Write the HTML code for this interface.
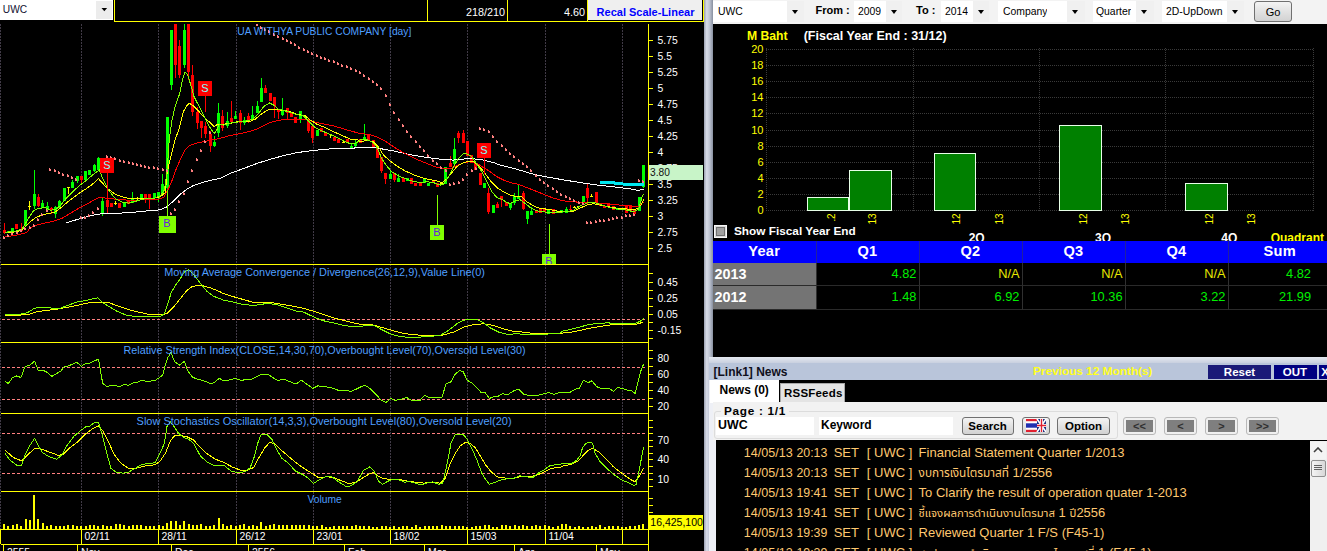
<!DOCTYPE html>
<html><head><meta charset="utf-8"><title>UWC</title><style>
html,body{margin:0;padding:0;background:#000;}
body{width:1327px;height:551px;overflow:hidden;position:relative;font-family:"Liberation Sans", Arial, sans-serif;}
.abs{position:absolute;box-sizing:border-box;}
.t{position:absolute;white-space:nowrap;line-height:1;}
.b{font-weight:bold;}
.combo{position:absolute;top:1px;height:21px;background:#fff;box-sizing:border-box;}
.cbtn{position:absolute;top:1px;height:21px;width:17px;background:#f0f0f0;}
.cbtn:after{content:"";position:absolute;left:5px;top:9px;border-left:3.5px solid transparent;border-right:3.5px solid transparent;border-top:4px solid #000;}
.ct{position:absolute;top:5px;font-size:10.4px;color:#000;white-space:nowrap;line-height:13px;}
.hdr{position:absolute;top:241px;height:22px;background:#0000ff;color:#fff;font-weight:bold;font-size:14.6px;letter-spacing:0.3px;text-align:center;line-height:20.5px;}
.cell{position:absolute;height:23.2px;line-height:22px;font-size:12.8px;text-align:right;box-sizing:border-box;padding-right:2px;color:#00f000;border-right:1px solid #303030;border-bottom:1px solid #2a2a2a;}
.yr{background:#747474;color:#fff;font-weight:bold;text-align:left;padding-left:1.5px;font-size:14.4px;}
.na{color:#e8e800;}
.btn{position:absolute;box-sizing:border-box;border:1px solid #707070;border-radius:3px;background:linear-gradient(#f4f4f4,#e2e2e2 50%,#d2d2d2);font-size:11px;font-weight:bold;color:#000;text-align:center;}
.nav{position:absolute;box-sizing:border-box;border:1px solid #b8b8b8;border-radius:3px;background:#f0f0f0;}
.nav i{position:absolute;left:2px;top:2px;right:2px;bottom:2px;background:#7f7f7f;color:#303030;font-style:normal;font-weight:bold;font-size:11px;text-align:center;line-height:13px;}
.nw{position:absolute;white-space:nowrap;color:#ffc870;font-size:13px;line-height:20px;font-family:"Liberation Sans", Arial, "Noto Sans Thai", "Tahoma", sans-serif;}
</style></head><body>
<svg width="704" height="551" viewBox="0 0 704 551" style="position:absolute;left:0;top:0" font-family='&quot;Liberation Sans&quot;, Arial, sans-serif' font-size="10.8px" shape-rendering="crispEdges">
<rect x="0" y="0" width="704" height="551" fill="#000"/>
<line x1="0.5" y1="24" x2="0.5" y2="529" stroke="#403a46" stroke-width="1" stroke-dasharray="2,1"/>
<line x1="81.5" y1="24" x2="81.5" y2="529" stroke="#403a46" stroke-width="1" stroke-dasharray="2,1"/>
<line x1="158.5" y1="24" x2="158.5" y2="529" stroke="#403a46" stroke-width="1" stroke-dasharray="2,1"/>
<line x1="236.5" y1="24" x2="236.5" y2="529" stroke="#403a46" stroke-width="1" stroke-dasharray="2,1"/>
<line x1="313.5" y1="24" x2="313.5" y2="529" stroke="#403a46" stroke-width="1" stroke-dasharray="2,1"/>
<line x1="390.5" y1="24" x2="390.5" y2="529" stroke="#403a46" stroke-width="1" stroke-dasharray="2,1"/>
<line x1="467.5" y1="24" x2="467.5" y2="529" stroke="#403a46" stroke-width="1" stroke-dasharray="2,1"/>
<line x1="545.5" y1="24" x2="545.5" y2="529" stroke="#403a46" stroke-width="1" stroke-dasharray="2,1"/>
<line x1="622.5" y1="24" x2="622.5" y2="529" stroke="#403a46" stroke-width="1" stroke-dasharray="2,1"/>
<g id="main">
<clipPath id="cpm"><rect x="1" y="24" width="647" height="240"/></clipPath>
<g clip-path="url(#cpm)">
<rect x="4" y="223.4" width="1" height="10.9" fill="#ff0000"/>
<rect x="3" y="229.7" width="3" height="3.7" fill="#ff0000"/>
<rect x="8" y="230.9" width="1" height="1.7" fill="#00ff00"/>
<rect x="7" y="230.9" width="3" height="1.7" fill="#00ff00"/>
<rect x="12" y="228.4" width="1" height="4.2" fill="#00ff00"/>
<rect x="11" y="228.4" width="3" height="4.2" fill="#00ff00"/>
<rect x="16" y="224.2" width="1" height="5.0" fill="#ff0000"/>
<rect x="15" y="224.2" width="3" height="5.0" fill="#ff0000"/>
<rect x="21" y="223.4" width="1" height="8.3" fill="#ff0000"/>
<rect x="20" y="228.7" width="3" height="2.2" fill="#ff0000"/>
<rect x="25" y="210.0" width="1" height="15.9" fill="#00ff00"/>
<rect x="24" y="210.0" width="3" height="15.9" fill="#00ff00"/>
<rect x="29" y="201.4" width="1" height="8.3" fill="#ffff00"/>
<rect x="28" y="205.6" width="3" height="1" fill="#ffff00"/>
<rect x="34" y="170.1" width="1" height="38.4" fill="#00ff00"/>
<rect x="33" y="193.8" width="3" height="12.2" fill="#00ff00"/>
<rect x="38" y="193.8" width="1" height="13.0" fill="#ff0000"/>
<rect x="37" y="196.8" width="3" height="9.2" fill="#ff0000"/>
<rect x="42" y="200.1" width="1" height="8.3" fill="#00ff00"/>
<rect x="41" y="203.1" width="3" height="4.5" fill="#00ff00"/>
<rect x="47" y="202.1" width="1" height="8.8" fill="#00ff00"/>
<rect x="46" y="205.9" width="3" height="4.2" fill="#00ff00"/>
<rect x="51" y="206.8" width="1" height="6.7" fill="#ff0000"/>
<rect x="50" y="207.6" width="3" height="2.2" fill="#ff0000"/>
<rect x="55" y="205.9" width="1" height="12.5" fill="#00ff00"/>
<rect x="54" y="206.8" width="3" height="6.7" fill="#00ff00"/>
<rect x="59" y="200.1" width="1" height="8.3" fill="#00ff00"/>
<rect x="58" y="200.9" width="3" height="6.7" fill="#00ff00"/>
<rect x="64" y="188.1" width="1" height="12.9" fill="#00ff00"/>
<rect x="63" y="188.1" width="3" height="12.9" fill="#00ff00"/>
<rect x="68" y="187.2" width="1" height="6.5" fill="#ffff00"/>
<rect x="67" y="187.2" width="3" height="1" fill="#ffff00"/>
<rect x="72" y="180.1" width="1" height="8.3" fill="#00ff00"/>
<rect x="71" y="181.7" width="3" height="5.8" fill="#00ff00"/>
<rect x="77" y="175.9" width="1" height="7.5" fill="#00ff00"/>
<rect x="76" y="175.9" width="3" height="5.0" fill="#00ff00"/>
<rect x="81" y="175.9" width="1" height="9.2" fill="#ff0000"/>
<rect x="80" y="175.9" width="3" height="4.2" fill="#ff0000"/>
<rect x="85" y="170.9" width="1" height="9.2" fill="#00ff00"/>
<rect x="84" y="170.9" width="3" height="9.2" fill="#00ff00"/>
<rect x="89" y="170.1" width="1" height="5.0" fill="#00ff00"/>
<rect x="88" y="170.1" width="3" height="5.0" fill="#00ff00"/>
<rect x="94" y="163.9" width="1" height="7.8" fill="#00ff00"/>
<rect x="93" y="165.0" width="3" height="5.8" fill="#00ff00"/>
<rect x="98" y="156.7" width="1" height="14.2" fill="#00ff00"/>
<rect x="97" y="158.0" width="3" height="12.0" fill="#00ff00"/>
<rect x="102" y="197.6" width="1" height="18.4" fill="#00ff00"/>
<rect x="101" y="200.9" width="3" height="12.5" fill="#00ff00"/>
<rect x="107" y="199.8" width="1" height="12.9" fill="#ff0000"/>
<rect x="106" y="199.8" width="3" height="7.0" fill="#ff0000"/>
<rect x="111" y="202.6" width="1" height="4.2" fill="#ff0000"/>
<rect x="110" y="202.6" width="3" height="4.2" fill="#ff0000"/>
<rect x="115" y="200.9" width="1" height="4.2" fill="#ffff00"/>
<rect x="114" y="202.9" width="3" height="1" fill="#ffff00"/>
<rect x="119" y="203.1" width="1" height="4.5" fill="#ff0000"/>
<rect x="118" y="203.1" width="3" height="4.5" fill="#ff0000"/>
<rect x="124" y="201.8" width="1" height="5.0" fill="#00ff00"/>
<rect x="123" y="201.8" width="3" height="5.0" fill="#00ff00"/>
<rect x="128" y="200.4" width="1" height="3.8" fill="#ff0000"/>
<rect x="127" y="200.4" width="3" height="3.8" fill="#ff0000"/>
<rect x="132" y="192.1" width="1" height="10.5" fill="#00ff00"/>
<rect x="131" y="198.4" width="3" height="4.2" fill="#00ff00"/>
<rect x="137" y="197.1" width="1" height="2.7" fill="#ffff00"/>
<rect x="136" y="198.4" width="3" height="1" fill="#ffff00"/>
<rect x="141" y="194.3" width="1" height="4.2" fill="#00ff00"/>
<rect x="140" y="194.3" width="3" height="4.2" fill="#00ff00"/>
<rect x="145" y="194.3" width="1" height="8.3" fill="#ff0000"/>
<rect x="144" y="194.3" width="3" height="4.2" fill="#ff0000"/>
<rect x="149" y="194.3" width="1" height="15.0" fill="#ff0000"/>
<rect x="148" y="194.3" width="3" height="4.2" fill="#ff0000"/>
<rect x="154" y="193.4" width="1" height="5.0" fill="#00ff00"/>
<rect x="153" y="193.4" width="3" height="5.0" fill="#00ff00"/>
<rect x="158" y="191.8" width="1" height="10.0" fill="#00ff00"/>
<rect x="157" y="191.8" width="3" height="5.8" fill="#00ff00"/>
<rect x="162" y="174.2" width="1" height="18.4" fill="#00ff00"/>
<rect x="161" y="184.2" width="3" height="8.3" fill="#00ff00"/>
<rect x="167" y="117.2" width="1" height="98.8" fill="#00ff00"/>
<rect x="166" y="117.2" width="3" height="71.2" fill="#00ff00"/>
<rect x="171" y="30.0" width="1" height="59.6" fill="#00ff00"/>
<rect x="170" y="30.0" width="3" height="55.1" fill="#00ff00"/>
<rect x="175" y="24.0" width="1" height="54.0" fill="#ff0000"/>
<rect x="174" y="24.0" width="3" height="41.0" fill="#ff0000"/>
<rect x="179" y="40.0" width="1" height="38.0" fill="#ff0000"/>
<rect x="178" y="45.9" width="3" height="29.1" fill="#ff0000"/>
<rect x="184" y="24.0" width="1" height="44.0" fill="#00ff00"/>
<rect x="183" y="30.0" width="3" height="35.0" fill="#00ff00"/>
<rect x="188" y="24.0" width="1" height="56.0" fill="#ff0000"/>
<rect x="187" y="24.0" width="3" height="48.0" fill="#ff0000"/>
<rect x="192" y="65.0" width="1" height="50.9" fill="#ff0000"/>
<rect x="191" y="75.0" width="3" height="36.7" fill="#ff0000"/>
<rect x="197" y="106.7" width="1" height="22.5" fill="#ff0000"/>
<rect x="196" y="111.7" width="3" height="11.7" fill="#ff0000"/>
<rect x="201" y="120.9" width="1" height="16.7" fill="#ff0000"/>
<rect x="200" y="120.9" width="3" height="7.5" fill="#ff0000"/>
<rect x="205" y="121.7" width="1" height="16.7" fill="#ff0000"/>
<rect x="204" y="125.9" width="3" height="8.3" fill="#ff0000"/>
<rect x="210" y="130.9" width="1" height="20.9" fill="#ff0000"/>
<rect x="209" y="134.2" width="3" height="11.7" fill="#ff0000"/>
<rect x="214" y="135.9" width="1" height="10.9" fill="#00ff00"/>
<rect x="213" y="141.8" width="3" height="4.2" fill="#00ff00"/>
<rect x="218" y="103.0" width="1" height="33.7" fill="#00ff00"/>
<rect x="217" y="113.4" width="3" height="19.2" fill="#00ff00"/>
<rect x="222" y="110.0" width="1" height="20.9" fill="#ff0000"/>
<rect x="221" y="115.9" width="3" height="11.7" fill="#ff0000"/>
<rect x="227" y="111.7" width="1" height="15.9" fill="#00ff00"/>
<rect x="226" y="120.9" width="3" height="5.0" fill="#00ff00"/>
<rect x="231" y="100.9" width="1" height="21.7" fill="#ff0000"/>
<rect x="230" y="118.4" width="3" height="3.3" fill="#ff0000"/>
<rect x="235" y="110.9" width="1" height="7.8" fill="#00ff00"/>
<rect x="234" y="115.9" width="3" height="2.8" fill="#00ff00"/>
<rect x="240" y="110.0" width="1" height="20.0" fill="#ff0000"/>
<rect x="239" y="112.9" width="3" height="9.7" fill="#ff0000"/>
<rect x="244" y="116.7" width="1" height="8.3" fill="#00ff00"/>
<rect x="243" y="120.1" width="3" height="2.5" fill="#00ff00"/>
<rect x="248" y="112.5" width="1" height="10.9" fill="#ff0000"/>
<rect x="247" y="115.9" width="3" height="5.0" fill="#ff0000"/>
<rect x="252" y="105.9" width="1" height="14.2" fill="#00ff00"/>
<rect x="251" y="115.0" width="3" height="5.0" fill="#00ff00"/>
<rect x="257" y="100.9" width="1" height="12.5" fill="#00ff00"/>
<rect x="256" y="105.9" width="3" height="7.5" fill="#00ff00"/>
<rect x="261" y="78.0" width="1" height="23.7" fill="#00ff00"/>
<rect x="260" y="88.0" width="3" height="13.7" fill="#00ff00"/>
<rect x="265" y="85.0" width="1" height="8.3" fill="#ff0000"/>
<rect x="264" y="88.0" width="3" height="5.3" fill="#ff0000"/>
<rect x="270" y="93.3" width="1" height="7.6" fill="#ff0000"/>
<rect x="269" y="93.3" width="3" height="7.6" fill="#ff0000"/>
<rect x="274" y="96.7" width="1" height="21.7" fill="#ff0000"/>
<rect x="273" y="96.7" width="3" height="9.2" fill="#ff0000"/>
<rect x="278" y="109.2" width="1" height="10.0" fill="#ff0000"/>
<rect x="277" y="109.2" width="3" height="2.5" fill="#ff0000"/>
<rect x="282" y="97.5" width="1" height="18.4" fill="#00ff00"/>
<rect x="281" y="109.7" width="3" height="5.3" fill="#00ff00"/>
<rect x="287" y="108.0" width="1" height="11.2" fill="#ff0000"/>
<rect x="286" y="108.0" width="3" height="4.5" fill="#ff0000"/>
<rect x="291" y="112.5" width="1" height="4.2" fill="#ff0000"/>
<rect x="290" y="112.5" width="3" height="4.2" fill="#ff0000"/>
<rect x="295" y="116.7" width="1" height="6.7" fill="#ff0000"/>
<rect x="294" y="116.7" width="3" height="6.7" fill="#ff0000"/>
<rect x="300" y="110.9" width="1" height="12.5" fill="#00ff00"/>
<rect x="299" y="110.9" width="3" height="8.3" fill="#00ff00"/>
<rect x="308" y="119.2" width="1" height="13.9" fill="#ff0000"/>
<rect x="307" y="119.2" width="3" height="12.2" fill="#ff0000"/>
<rect x="312" y="125.9" width="1" height="16.7" fill="#ff0000"/>
<rect x="311" y="125.9" width="3" height="12.5" fill="#ff0000"/>
<rect x="317" y="129.7" width="1" height="6.2" fill="#00ff00"/>
<rect x="316" y="129.7" width="3" height="6.2" fill="#00ff00"/>
<rect x="321" y="128.4" width="1" height="3.3" fill="#ff0000"/>
<rect x="320" y="128.4" width="3" height="3.3" fill="#ff0000"/>
<rect x="325" y="132.6" width="1" height="3.3" fill="#ff0000"/>
<rect x="324" y="132.6" width="3" height="3.3" fill="#ff0000"/>
<rect x="330" y="133.7" width="1" height="4.7" fill="#ffff00"/>
<rect x="329" y="133.7" width="3" height="1" fill="#ffff00"/>
<rect x="334" y="136.7" width="1" height="4.2" fill="#ff0000"/>
<rect x="333" y="136.7" width="3" height="4.2" fill="#ff0000"/>
<rect x="338" y="138.9" width="1" height="3.7" fill="#ff0000"/>
<rect x="337" y="138.9" width="3" height="3.7" fill="#ff0000"/>
<rect x="343" y="140.9" width="1" height="1.8" fill="#ffff00"/>
<rect x="342" y="141.8" width="3" height="1" fill="#ffff00"/>
<rect x="347" y="139.2" width="1" height="3.3" fill="#ff0000"/>
<rect x="346" y="139.2" width="3" height="3.3" fill="#ff0000"/>
<rect x="351" y="143.4" width="1" height="4.2" fill="#00ff00"/>
<rect x="350" y="145.9" width="3" height="1.7" fill="#00ff00"/>
<rect x="355" y="140.1" width="1" height="7.5" fill="#00ff00"/>
<rect x="354" y="142.6" width="3" height="3.3" fill="#00ff00"/>
<rect x="360" y="139.2" width="1" height="3.3" fill="#ff0000"/>
<rect x="359" y="139.2" width="3" height="3.3" fill="#ff0000"/>
<rect x="364" y="124.0" width="1" height="15.2" fill="#00ff00"/>
<rect x="363" y="136.7" width="3" height="2.5" fill="#00ff00"/>
<rect x="368" y="134.2" width="1" height="5.8" fill="#ff0000"/>
<rect x="367" y="134.2" width="3" height="5.8" fill="#ff0000"/>
<rect x="373" y="140.0" width="1" height="6.7" fill="#ff0000"/>
<rect x="372" y="140.0" width="3" height="6.7" fill="#ff0000"/>
<rect x="377" y="145.9" width="1" height="11.7" fill="#ff0000"/>
<rect x="376" y="145.9" width="3" height="11.7" fill="#ff0000"/>
<rect x="381" y="156.7" width="1" height="15.9" fill="#ff0000"/>
<rect x="380" y="156.7" width="3" height="14.2" fill="#ff0000"/>
<rect x="385" y="173.4" width="1" height="10.4" fill="#ff0000"/>
<rect x="384" y="173.4" width="3" height="5.8" fill="#ff0000"/>
<rect x="390" y="170.9" width="1" height="8.3" fill="#00ff00"/>
<rect x="389" y="173.7" width="3" height="5.5" fill="#00ff00"/>
<rect x="394" y="173.1" width="1" height="8.7" fill="#ff0000"/>
<rect x="393" y="173.1" width="3" height="7.0" fill="#ff0000"/>
<rect x="398" y="173.7" width="1" height="8.0" fill="#00ff00"/>
<rect x="397" y="178.4" width="3" height="3.3" fill="#00ff00"/>
<rect x="403" y="178.4" width="1" height="3.3" fill="#ff0000"/>
<rect x="402" y="178.4" width="3" height="3.3" fill="#ff0000"/>
<rect x="407" y="177.6" width="1" height="3.3" fill="#00ff00"/>
<rect x="406" y="177.6" width="3" height="3.3" fill="#00ff00"/>
<rect x="411" y="178.4" width="1" height="5.3" fill="#ff0000"/>
<rect x="410" y="178.4" width="3" height="5.3" fill="#ff0000"/>
<rect x="415" y="182.6" width="1" height="3.3" fill="#ff0000"/>
<rect x="414" y="182.6" width="3" height="3.3" fill="#ff0000"/>
<rect x="420" y="183.1" width="1" height="2.5" fill="#ff0000"/>
<rect x="419" y="183.1" width="3" height="2.5" fill="#ff0000"/>
<rect x="424" y="178.4" width="1" height="5.0" fill="#00ff00"/>
<rect x="423" y="178.4" width="3" height="5.0" fill="#00ff00"/>
<rect x="428" y="182.6" width="1" height="3.3" fill="#00ff00"/>
<rect x="427" y="182.6" width="3" height="3.3" fill="#00ff00"/>
<rect x="433" y="180.9" width="1" height="2.5" fill="#ff0000"/>
<rect x="432" y="180.9" width="3" height="2.5" fill="#ff0000"/>
<rect x="437" y="182.6" width="1" height="4.2" fill="#ff0000"/>
<rect x="436" y="182.6" width="3" height="4.2" fill="#ff0000"/>
<rect x="441" y="182.1" width="1" height="3.0" fill="#ffff00"/>
<rect x="440" y="183.4" width="3" height="1" fill="#ffff00"/>
<rect x="445" y="167.1" width="1" height="16.4" fill="#00ff00"/>
<rect x="444" y="167.1" width="3" height="16.4" fill="#00ff00"/>
<rect x="450" y="155.9" width="1" height="10.9" fill="#ff0000"/>
<rect x="449" y="163.4" width="3" height="3.3" fill="#ff0000"/>
<rect x="454" y="137.5" width="1" height="26.7" fill="#00ff00"/>
<rect x="453" y="149.2" width="3" height="15.0" fill="#00ff00"/>
<rect x="458" y="130.8" width="1" height="12.5" fill="#ff0000"/>
<rect x="457" y="132.5" width="3" height="5.8" fill="#ff0000"/>
<rect x="463" y="130.0" width="1" height="12.5" fill="#ff0000"/>
<rect x="462" y="132.5" width="3" height="10.0" fill="#ff0000"/>
<rect x="467" y="140.9" width="1" height="15.0" fill="#ff0000"/>
<rect x="466" y="140.9" width="3" height="15.0" fill="#ff0000"/>
<rect x="471" y="155.0" width="1" height="7.5" fill="#ff0000"/>
<rect x="470" y="155.0" width="3" height="7.5" fill="#ff0000"/>
<rect x="475" y="162.6" width="1" height="7.5" fill="#ff0000"/>
<rect x="474" y="162.6" width="3" height="7.5" fill="#ff0000"/>
<rect x="480" y="173.4" width="1" height="11.4" fill="#ff0000"/>
<rect x="479" y="173.4" width="3" height="11.4" fill="#ff0000"/>
<rect x="484" y="183.4" width="1" height="5.0" fill="#00ff00"/>
<rect x="483" y="183.4" width="3" height="5.0" fill="#00ff00"/>
<rect x="488" y="187.6" width="1" height="25.9" fill="#ff0000"/>
<rect x="487" y="193.4" width="3" height="18.4" fill="#ff0000"/>
<rect x="493" y="205.1" width="1" height="8.3" fill="#00ff00"/>
<rect x="492" y="205.1" width="3" height="8.3" fill="#00ff00"/>
<rect x="497" y="201.8" width="1" height="5.8" fill="#ff0000"/>
<rect x="496" y="204.3" width="3" height="3.3" fill="#ff0000"/>
<rect x="501" y="195.9" width="1" height="10.9" fill="#ff0000"/>
<rect x="500" y="195.9" width="3" height="4.2" fill="#ff0000"/>
<rect x="506" y="202.1" width="1" height="4.3" fill="#ff0000"/>
<rect x="505" y="202.1" width="3" height="4.3" fill="#ff0000"/>
<rect x="510" y="202.6" width="1" height="7.2" fill="#00ff00"/>
<rect x="509" y="202.6" width="3" height="5.5" fill="#00ff00"/>
<rect x="514" y="193.1" width="1" height="12.0" fill="#00ff00"/>
<rect x="513" y="195.9" width="3" height="6.7" fill="#00ff00"/>
<rect x="518" y="184.3" width="1" height="15.0" fill="#00ff00"/>
<rect x="517" y="195.9" width="3" height="3.3" fill="#00ff00"/>
<rect x="523" y="190.9" width="1" height="19.2" fill="#ff0000"/>
<rect x="522" y="192.6" width="3" height="16.7" fill="#ff0000"/>
<rect x="527" y="211.0" width="1" height="12.5" fill="#00ff00"/>
<rect x="526" y="211.0" width="3" height="8.3" fill="#00ff00"/>
<rect x="531" y="207.1" width="1" height="8.0" fill="#00ff00"/>
<rect x="530" y="211.0" width="3" height="4.2" fill="#00ff00"/>
<rect x="536" y="210.1" width="1" height="3.3" fill="#ff0000"/>
<rect x="535" y="210.1" width="3" height="3.3" fill="#ff0000"/>
<rect x="540" y="209.3" width="1" height="3.3" fill="#ff0000"/>
<rect x="539" y="209.3" width="3" height="3.3" fill="#ff0000"/>
<rect x="544" y="208.5" width="1" height="3.3" fill="#ff0000"/>
<rect x="543" y="208.5" width="3" height="3.3" fill="#ff0000"/>
<rect x="548" y="209.3" width="1" height="4.2" fill="#00ff00"/>
<rect x="547" y="209.3" width="3" height="4.2" fill="#00ff00"/>
<rect x="553" y="208.5" width="1" height="5.0" fill="#ff0000"/>
<rect x="552" y="208.5" width="3" height="5.0" fill="#ff0000"/>
<rect x="557" y="210.6" width="1" height="2.8" fill="#00ff00"/>
<rect x="556" y="210.6" width="3" height="2.8" fill="#00ff00"/>
<rect x="561" y="210.1" width="1" height="2.5" fill="#00ff00"/>
<rect x="560" y="210.1" width="3" height="2.5" fill="#00ff00"/>
<rect x="566" y="207.1" width="1" height="5.5" fill="#00ff00"/>
<rect x="565" y="209.3" width="3" height="3.3" fill="#00ff00"/>
<rect x="570" y="205.1" width="1" height="5.0" fill="#ff0000"/>
<rect x="569" y="208.5" width="3" height="1.7" fill="#ff0000"/>
<rect x="574" y="205.5" width="1" height="2.7" fill="#ffff00"/>
<rect x="573" y="206.8" width="3" height="1" fill="#ffff00"/>
<rect x="578" y="205.5" width="1" height="1.8" fill="#ffff00"/>
<rect x="577" y="206.3" width="3" height="1" fill="#ffff00"/>
<rect x="583" y="196.4" width="1" height="6.2" fill="#00ff00"/>
<rect x="582" y="196.4" width="3" height="6.2" fill="#00ff00"/>
<rect x="587" y="182.6" width="1" height="21.7" fill="#ff0000"/>
<rect x="586" y="188.4" width="3" height="9.2" fill="#ff0000"/>
<rect x="591" y="194.3" width="1" height="1.7" fill="#ffff00"/>
<rect x="590" y="195.9" width="3" height="1" fill="#ffff00"/>
<rect x="596" y="192.1" width="1" height="10.5" fill="#ff0000"/>
<rect x="595" y="192.1" width="3" height="10.5" fill="#ff0000"/>
<rect x="600" y="203.1" width="1" height="3.3" fill="#ff0000"/>
<rect x="599" y="203.1" width="3" height="3.3" fill="#ff0000"/>
<rect x="604" y="205.9" width="1" height="2.5" fill="#ff0000"/>
<rect x="603" y="205.9" width="3" height="2.5" fill="#ff0000"/>
<rect x="608" y="203.4" width="1" height="3.3" fill="#ff0000"/>
<rect x="607" y="203.4" width="3" height="3.3" fill="#ff0000"/>
<rect x="613" y="205.9" width="1" height="4.2" fill="#ff0000"/>
<rect x="612" y="205.9" width="3" height="4.2" fill="#ff0000"/>
<rect x="617" y="207.6" width="1" height="2.5" fill="#00ff00"/>
<rect x="616" y="207.6" width="3" height="2.5" fill="#00ff00"/>
<rect x="621" y="207.6" width="1" height="2.5" fill="#ff0000"/>
<rect x="620" y="207.6" width="3" height="2.5" fill="#ff0000"/>
<rect x="626" y="205.9" width="1" height="6.7" fill="#ff0000"/>
<rect x="625" y="205.9" width="3" height="6.7" fill="#ff0000"/>
<rect x="630" y="205.1" width="1" height="5.8" fill="#ff0000"/>
<rect x="629" y="205.1" width="3" height="5.8" fill="#ff0000"/>
<rect x="634" y="210.1" width="1" height="4.2" fill="#ff0000"/>
<rect x="633" y="210.1" width="3" height="4.2" fill="#ff0000"/>
<rect x="639" y="196.8" width="1" height="14.2" fill="#00ff00"/>
<rect x="638" y="196.8" width="3" height="14.2" fill="#00ff00"/>
<rect x="643" y="164.7" width="1" height="23.7" fill="#00ff00"/>
<rect x="642" y="164.7" width="3" height="22.0" fill="#00ff00"/>
</g>
<g shape-rendering="crispEdges" clip-path="url(#cpm)">
<polyline points="65.9,223.0 75.1,220.1 86.8,216.8 96.8,214.3 106.8,213.5 116.9,213.5 126.9,212.6 138.6,211.8 150.3,210.6 160.3,209.8 166.9,206.8 173.6,200.9 180.3,194.3 187.0,189.2 193.7,185.4 202.0,182.6 210.4,180.4 220.0,178.4 230.1,173.5 243.5,168.5 256.8,163.5 270.2,159.3 283.6,155.6 296.9,152.6 310.3,150.9 323.6,149.3 337.0,148.6 350.3,148.4 360.0,147.5 376.7,148.0 393.4,150.9 410.1,154.7 426.8,157.5 440.1,159.2 453.5,160.1 466.8,158.7 480.2,159.2 493.6,162.6 500.0,165.0 516.7,169.2 533.4,174.2 550.1,177.6 566.8,180.4 583.5,183.1 600.2,185.4 616.9,187.2 630.2,188.9 638.6,190.4 643.6,189.2" fill="none" stroke="#ffffff" stroke-width="1" />
<polyline points="4.2,237.1 16.7,235.1 26.7,232.6 30.1,227.6 36.7,225.1 45.1,223.0 53.4,221.3 61.8,218.5 70.1,213.5 78.5,208.4 86.8,204.3 93.5,200.1 98.5,197.6 106.8,198.1 116.9,199.3 126.9,200.1 136.9,200.1 146.9,199.8 156.9,199.8 163.6,197.6 168.6,188.4 173.6,176.7 175.0,171.8 180.1,160.1 185.1,150.1 189.2,145.9 195.1,143.4 203.4,141.8 211.8,140.1 220.1,138.4 228.5,135.9 236.8,134.2 245.2,132.6 253.5,130.4 261.9,126.7 270.2,122.6 278.5,120.4 286.9,119.2 295.2,119.2 303.6,119.2 310.3,120.9 316.9,122.6 325.3,124.2 333.6,125.9 342.0,128.4 350.3,130.9 358.7,133.1 360.0,133.7 368.3,134.2 376.7,136.7 385.0,140.9 393.4,146.7 401.7,151.7 410.1,155.9 418.4,160.1 426.8,163.4 435.1,166.7 443.5,168.7 450.2,168.7 456.8,165.9 463.5,162.6 470.2,161.7 476.9,163.4 483.5,167.6 490.2,171.7 496.9,176.7 503.6,180.1 510.3,182.6 518.6,184.3 526.9,187.6 535.3,190.9 543.6,194.3 552.0,197.6 560.3,200.1 568.7,201.8 580.1,202.1 590.2,202.6 600.2,203.1 610.2,204.3 620.2,205.1 630.2,205.9 638.6,206.3 643.6,201.8" fill="none" stroke="#ff0000" stroke-width="1" />
<polyline points="5.0,232.6 13.4,232.2 21.7,230.4 23.4,228.5 30.1,221.8 35.9,217.6 41.7,215.1 48.4,213.5 55.1,212.1 60.1,208.4 66.8,202.6 73.5,197.6 80.1,192.6 86.8,188.4 93.5,183.4 98.5,178.7 102.7,183.4 108.5,189.2 115.2,194.3 121.9,196.8 128.5,198.4 136.9,198.8 145.2,198.8 153.6,198.4 160.3,196.8 165.3,192.6 167.2,171.8 170.9,156.8 175.0,140.1 179.2,128.4 183.4,111.7 186.7,105.9 189.2,103.0 193.4,105.9 198.4,110.9 205.1,118.4 210.1,122.6 214.3,126.7 216.8,124.7 223.5,124.2 230.1,123.4 236.8,121.7 243.5,121.2 250.2,121.2 255.2,119.2 260.2,115.0 265.2,111.4 269.4,109.5 276.9,109.7 283.6,110.4 290.2,111.7 296.9,114.2 305.3,115.9 310.3,120.1 316.9,124.2 325.3,127.6 333.6,131.7 342.0,135.4 350.3,139.2 358.7,140.1 360.0,141.7 366.7,140.4 373.4,141.7 378.4,146.7 383.4,155.0 390.1,160.9 396.7,165.9 405.1,170.9 413.4,174.7 421.8,177.6 430.1,179.7 436.8,180.9 441.8,182.6 446.8,179.2 451.8,172.6 456.8,166.7 461.8,163.4 466.8,161.7 473.5,161.4 476.9,164.2 481.9,169.2 486.9,175.9 491.9,182.6 496.9,187.6 503.6,191.8 510.3,195.1 516.9,196.8 521.9,196.8 526.9,201.8 533.6,206.0 540.3,208.5 548.6,209.3 557.0,211.0 565.3,211.5 573.7,211.0 580.1,208.1 586.8,205.1 593.5,203.8 600.2,205.1 608.5,206.8 616.9,208.1 625.2,208.8 633.6,209.8 638.6,208.4 641.9,203.4 643.6,199.3" fill="none" stroke="#ffff00" stroke-width="1" />
<polyline points="5.0,232.2 13.4,231.7 21.7,229.2 23.4,226.8 28.4,218.5 33.4,211.0 38.4,208.4 45.1,207.6 50.1,210.1 55.1,209.8 60.1,205.9 66.8,197.6 73.5,190.9 80.1,185.1 86.8,180.1 93.5,174.2 99.3,170.1 102.7,178.4 108.5,190.1 115.2,198.4 121.9,202.1 128.5,203.1 136.9,200.9 145.2,198.8 153.6,198.4 160.3,195.9 164.4,190.1 167.2,170.1 169.2,140.1 171.7,121.7 175.0,106.7 179.2,95.0 180.1,92.1 182.6,78.8 185.1,72.1 187.6,74.6 190.9,85.4 194.2,97.1 198.4,105.0 203.4,115.0 208.4,125.1 214.3,133.7 216.8,130.1 219.3,124.2 223.5,125.1 228.5,123.4 233.5,122.6 240.2,121.7 246.8,120.9 252.7,119.2 258.5,113.4 264.4,105.9 269.4,103.0 273.5,105.0 278.5,109.2 283.6,110.4 290.2,112.5 296.9,114.7 303.6,115.9 308.6,120.9 315.3,127.6 322.0,130.9 328.6,133.7 335.3,136.7 342.0,140.1 348.7,143.1 355.3,143.8 360.0,140.0 366.7,139.7 371.7,141.7 376.7,146.7 381.7,158.4 386.7,165.9 391.7,171.7 398.4,175.9 405.1,178.4 411.8,180.9 420.1,182.6 426.8,181.8 433.5,182.6 440.1,185.1 443.5,184.3 448.5,176.7 453.5,166.7 458.5,158.4 463.5,153.4 466.8,153.7 471.9,156.7 476.9,164.2 481.9,171.7 486.9,181.8 491.9,191.8 496.9,197.6 501.9,199.3 506.9,202.6 510.3,203.5 515.3,201.0 520.3,199.8 525.3,203.5 530.3,207.6 535.3,210.1 540.3,211.8 547.0,212.1 553.7,212.1 560.3,212.1 567.0,211.8 573.7,210.1 580.1,205.9 586.8,203.1 593.5,202.1 600.2,204.3 606.8,206.8 613.5,208.4 620.2,209.3 626.9,210.1 633.6,211.8 638.6,209.3 641.9,197.6 643.6,193.8" fill="none" stroke="#80ff00" stroke-width="1" />
<polyline points="599.8,182.2 611.0,182.6 624.4,184.2 643.6,184.6" fill="none" stroke="#00e8f0" stroke-width="3" />
</g>
<g clip-path="url(#cpm)">
<path d="M3 236 h1 v1 h1 v2 h-2 z" fill="#ff8080"/>
<path d="M7 234 h1 v1 h1 v2 h-2 z" fill="#ff8080"/>
<path d="M11 232 h1 v1 h1 v2 h-2 z" fill="#ff8080"/>
<path d="M16 231 h1 v1 h1 v2 h-2 z" fill="#ff8080"/>
<path d="M20 229 h1 v1 h1 v2 h-2 z" fill="#ff8080"/>
<path d="M24 227 h1 v1 h1 v2 h-2 z" fill="#ff8080"/>
<path d="M29 226 h1 v1 h1 v2 h-2 z" fill="#ff8080"/>
<path d="M33 224 h1 v1 h1 v2 h-2 z" fill="#ff8080"/>
<path d="M37 218 h1 v1 h1 v2 h-2 z" fill="#ff8080"/>
<path d="M41 213 h1 v1 h1 v2 h-2 z" fill="#ff8080"/>
<path d="M46 209 h1 v1 h1 v2 h-2 z" fill="#ff8080"/>
<path d="M49 168 h1 v1 h1 v2 h-2 z" fill="#ff8080"/>
<path d="M54 169 h1 v1 h1 v2 h-2 z" fill="#ff8080"/>
<path d="M58 171 h1 v1 h1 v2 h-2 z" fill="#ff8080"/>
<path d="M62 173 h1 v1 h1 v2 h-2 z" fill="#ff8080"/>
<path d="M67 174 h1 v1 h1 v2 h-2 z" fill="#ff8080"/>
<path d="M71 176 h1 v1 h1 v2 h-2 z" fill="#ff8080"/>
<path d="M75 178 h1 v1 h1 v2 h-2 z" fill="#ff8080"/>
<path d="M80 216 h1 v1 h1 v2 h-2 z" fill="#ff8080"/>
<path d="M84 216 h1 v1 h1 v2 h-2 z" fill="#ff8080"/>
<path d="M88 214 h1 v1 h1 v2 h-2 z" fill="#ff8080"/>
<path d="M92 211 h1 v1 h1 v2 h-2 z" fill="#ff8080"/>
<path d="M97 207 h1 v1 h1 v2 h-2 z" fill="#ff8080"/>
<path d="M106 155 h1 v1 h1 v2 h-2 z" fill="#ff8080"/>
<path d="M110 156 h1 v1 h1 v2 h-2 z" fill="#ff8080"/>
<path d="M114 157 h1 v1 h1 v2 h-2 z" fill="#ff8080"/>
<path d="M119 159 h1 v1 h1 v2 h-2 z" fill="#ff8080"/>
<path d="M123 160 h1 v1 h1 v2 h-2 z" fill="#ff8080"/>
<path d="M128 161 h1 v1 h1 v2 h-2 z" fill="#ff8080"/>
<path d="M132 162 h1 v1 h1 v2 h-2 z" fill="#ff8080"/>
<path d="M136 163 h1 v1 h1 v2 h-2 z" fill="#ff8080"/>
<path d="M140 164 h1 v1 h1 v2 h-2 z" fill="#ff8080"/>
<path d="M144 165 h1 v1 h1 v2 h-2 z" fill="#ff8080"/>
<path d="M148 166 h1 v1 h1 v2 h-2 z" fill="#ff8080"/>
<path d="M153 166 h1 v1 h1 v2 h-2 z" fill="#ff8080"/>
<path d="M157 167 h1 v1 h1 v2 h-2 z" fill="#ff8080"/>
<path d="M162 168 h1 v1 h1 v2 h-2 z" fill="#ff8080"/>
<path d="M166 169 h1 v1 h1 v2 h-2 z" fill="#ff8080"/>
<path d="M170 212 h1 v1 h1 v2 h-2 z" fill="#ff8080"/>
<path d="M174 208 h1 v1 h1 v2 h-2 z" fill="#ff8080"/>
<path d="M178 200 h1 v1 h1 v2 h-2 z" fill="#ff8080"/>
<path d="M183 192 h1 v1 h1 v2 h-2 z" fill="#ff8080"/>
<path d="M187 180 h1 v1 h1 v2 h-2 z" fill="#ff8080"/>
<path d="M191 169 h1 v1 h1 v2 h-2 z" fill="#ff8080"/>
<path d="M196 158 h1 v1 h1 v2 h-2 z" fill="#ff8080"/>
<path d="M200 149 h1 v1 h1 v2 h-2 z" fill="#ff8080"/>
<path d="M200 149 h1 v1 h1 v2 h-2 z" fill="#ff8080"/>
<path d="M204 140 h1 v1 h1 v2 h-2 z" fill="#ff8080"/>
<path d="M209 131 h1 v1 h1 v2 h-2 z" fill="#ff8080"/>
<path d="M256 23 h1 v1 h1 v2 h-2 z" fill="#ff8080"/>
<path d="M260 26 h1 v1 h1 v2 h-2 z" fill="#ff8080"/>
<path d="M264 28 h1 v1 h1 v2 h-2 z" fill="#ff8080"/>
<path d="M268 30 h1 v1 h1 v2 h-2 z" fill="#ff8080"/>
<path d="M273 33 h1 v1 h1 v2 h-2 z" fill="#ff8080"/>
<path d="M277 35 h1 v1 h1 v2 h-2 z" fill="#ff8080"/>
<path d="M282 37 h1 v1 h1 v2 h-2 z" fill="#ff8080"/>
<path d="M286 39 h1 v1 h1 v2 h-2 z" fill="#ff8080"/>
<path d="M290 41 h1 v1 h1 v2 h-2 z" fill="#ff8080"/>
<path d="M294 43 h1 v1 h1 v2 h-2 z" fill="#ff8080"/>
<path d="M298 46 h1 v1 h1 v2 h-2 z" fill="#ff8080"/>
<path d="M303 48 h1 v1 h1 v2 h-2 z" fill="#ff8080"/>
<path d="M307 50 h1 v1 h1 v2 h-2 z" fill="#ff8080"/>
<path d="M311 52 h1 v1 h1 v2 h-2 z" fill="#ff8080"/>
<path d="M316 54 h1 v1 h1 v2 h-2 z" fill="#ff8080"/>
<path d="M320 56 h1 v1 h1 v2 h-2 z" fill="#ff8080"/>
<path d="M324 57 h1 v1 h1 v2 h-2 z" fill="#ff8080"/>
<path d="M328 59 h1 v1 h1 v2 h-2 z" fill="#ff8080"/>
<path d="M333 60 h1 v1 h1 v2 h-2 z" fill="#ff8080"/>
<path d="M337 62 h1 v1 h1 v2 h-2 z" fill="#ff8080"/>
<path d="M341 64 h1 v1 h1 v2 h-2 z" fill="#ff8080"/>
<path d="M346 65 h1 v1 h1 v2 h-2 z" fill="#ff8080"/>
<path d="M350 67 h1 v1 h1 v2 h-2 z" fill="#ff8080"/>
<path d="M355 69 h1 v1 h1 v2 h-2 z" fill="#ff8080"/>
<path d="M359 71 h1 v1 h1 v2 h-2 z" fill="#ff8080"/>
<path d="M363 74 h1 v1 h1 v2 h-2 z" fill="#ff8080"/>
<path d="M368 77 h1 v1 h1 v2 h-2 z" fill="#ff8080"/>
<path d="M363 74 h1 v1 h1 v2 h-2 z" fill="#ff8080"/>
<path d="M368 77 h1 v1 h1 v2 h-2 z" fill="#ff8080"/>
<path d="M372 80 h1 v1 h1 v2 h-2 z" fill="#ff8080"/>
<path d="M376 83 h1 v1 h1 v2 h-2 z" fill="#ff8080"/>
<path d="M380 87 h1 v1 h1 v2 h-2 z" fill="#ff8080"/>
<path d="M385 94 h1 v1 h1 v2 h-2 z" fill="#ff8080"/>
<path d="M389 103 h1 v1 h1 v2 h-2 z" fill="#ff8080"/>
<path d="M393 111 h1 v1 h1 v2 h-2 z" fill="#ff8080"/>
<path d="M398 118 h1 v1 h1 v2 h-2 z" fill="#ff8080"/>
<path d="M402 124 h1 v1 h1 v2 h-2 z" fill="#ff8080"/>
<path d="M406 130 h1 v1 h1 v2 h-2 z" fill="#ff8080"/>
<path d="M410 135 h1 v1 h1 v2 h-2 z" fill="#ff8080"/>
<path d="M415 140 h1 v1 h1 v2 h-2 z" fill="#ff8080"/>
<path d="M419 145 h1 v1 h1 v2 h-2 z" fill="#ff8080"/>
<path d="M423 149 h1 v1 h1 v2 h-2 z" fill="#ff8080"/>
<path d="M427 154 h1 v1 h1 v2 h-2 z" fill="#ff8080"/>
<path d="M432 159 h1 v1 h1 v2 h-2 z" fill="#ff8080"/>
<path d="M436 162 h1 v1 h1 v2 h-2 z" fill="#ff8080"/>
<path d="M440 166 h1 v1 h1 v2 h-2 z" fill="#ff8080"/>
<path d="M445 169 h1 v1 h1 v2 h-2 z" fill="#ff8080"/>
<path d="M449 183 h1 v1 h1 v2 h-2 z" fill="#ff8080"/>
<path d="M453 182 h1 v1 h1 v2 h-2 z" fill="#ff8080"/>
<path d="M458 181 h1 v1 h1 v2 h-2 z" fill="#ff8080"/>
<path d="M462 178 h1 v1 h1 v2 h-2 z" fill="#ff8080"/>
<path d="M466 173 h1 v1 h1 v2 h-2 z" fill="#ff8080"/>
<path d="M471 169 h1 v1 h1 v2 h-2 z" fill="#ff8080"/>
<path d="M475 167 h1 v1 h1 v2 h-2 z" fill="#ff8080"/>
<path d="M479 127 h1 v1 h1 v2 h-2 z" fill="#ff8080"/>
<path d="M483 128 h1 v1 h1 v2 h-2 z" fill="#ff8080"/>
<path d="M488 130 h1 v1 h1 v2 h-2 z" fill="#ff8080"/>
<path d="M492 135 h1 v1 h1 v2 h-2 z" fill="#ff8080"/>
<path d="M496 140 h1 v1 h1 v2 h-2 z" fill="#ff8080"/>
<path d="M501 144 h1 v1 h1 v2 h-2 z" fill="#ff8080"/>
<path d="M505 148 h1 v1 h1 v2 h-2 z" fill="#ff8080"/>
<path d="M509 152 h1 v1 h1 v2 h-2 z" fill="#ff8080"/>
<path d="M513 155 h1 v1 h1 v2 h-2 z" fill="#ff8080"/>
<path d="M518 159 h1 v1 h1 v2 h-2 z" fill="#ff8080"/>
<path d="M522 162 h1 v1 h1 v2 h-2 z" fill="#ff8080"/>
<path d="M526 165 h1 v1 h1 v2 h-2 z" fill="#ff8080"/>
<path d="M530 169 h1 v1 h1 v2 h-2 z" fill="#ff8080"/>
<path d="M535 174 h1 v1 h1 v2 h-2 z" fill="#ff8080"/>
<path d="M539 178 h1 v1 h1 v2 h-2 z" fill="#ff8080"/>
<path d="M543 181 h1 v1 h1 v2 h-2 z" fill="#ff8080"/>
<path d="M547 184 h1 v1 h1 v2 h-2 z" fill="#ff8080"/>
<path d="M552 187 h1 v1 h1 v2 h-2 z" fill="#ff8080"/>
<path d="M556 190 h1 v1 h1 v2 h-2 z" fill="#ff8080"/>
<path d="M560 193 h1 v1 h1 v2 h-2 z" fill="#ff8080"/>
<path d="M565 195 h1 v1 h1 v2 h-2 z" fill="#ff8080"/>
<path d="M569 197 h1 v1 h1 v2 h-2 z" fill="#ff8080"/>
<path d="M573 199 h1 v1 h1 v2 h-2 z" fill="#ff8080"/>
<path d="M578 201 h1 v1 h1 v2 h-2 z" fill="#ff8080"/>
<path d="M582 202 h1 v1 h1 v2 h-2 z" fill="#ff8080"/>
<path d="M586 221 h1 v1 h1 v2 h-2 z" fill="#ff8080"/>
<path d="M590 221 h1 v1 h1 v2 h-2 z" fill="#ff8080"/>
<path d="M595 220 h1 v1 h1 v2 h-2 z" fill="#ff8080"/>
<path d="M599 219 h1 v1 h1 v2 h-2 z" fill="#ff8080"/>
<path d="M603 219 h1 v1 h1 v2 h-2 z" fill="#ff8080"/>
<path d="M608 218 h1 v1 h1 v2 h-2 z" fill="#ff8080"/>
<path d="M612 217 h1 v1 h1 v2 h-2 z" fill="#ff8080"/>
<path d="M616 216 h1 v1 h1 v2 h-2 z" fill="#ff8080"/>
<path d="M621 216 h1 v1 h1 v2 h-2 z" fill="#ff8080"/>
<path d="M625 214 h1 v1 h1 v2 h-2 z" fill="#ff8080"/>
<path d="M629 214 h1 v1 h1 v2 h-2 z" fill="#ff8080"/>
<path d="M633 213 h1 v1 h1 v2 h-2 z" fill="#ff8080"/>
<path d="M638 179 h1 v1 h1 v2 h-2 z" fill="#ff8080"/>
<path d="M642 180 h1 v1 h1 v2 h-2 z" fill="#ff8080"/>
</g>
<rect x="205.0" y="96.0" width="1" height="16.0" fill="#ff0000"/>
<rect x="198.0" y="81.0" width="14.0" height="15.0" fill="#ff0000"/>
<text x="205.0" y="91.5" fill="#7fffff" text-anchor="middle" font-size="11px" shape-rendering="auto">S</text>
<rect x="107.0" y="173.0" width="1" height="39.0" fill="#ff0000"/>
<rect x="100.0" y="158.0" width="14.0" height="15.0" fill="#ff0000"/>
<text x="107.0" y="168.5" fill="#7fffff" text-anchor="middle" font-size="11px" shape-rendering="auto">S</text>
<rect x="484.0" y="158.0" width="1" height="16.0" fill="#ff0000"/>
<rect x="477.0" y="143.0" width="14.0" height="15.0" fill="#ff0000"/>
<text x="484.0" y="153.5" fill="#7fffff" text-anchor="middle" font-size="11px" shape-rendering="auto">S</text>
<rect x="167.0" y="190.0" width="1" height="26.0" fill="#80ff00"/>
<rect x="158.5" y="216.0" width="17.0" height="17.0" fill="#80ff00"/>
<text x="167.0" y="226.9" fill="#6020e0" text-anchor="middle" font-size="11px" shape-rendering="auto">B</text>
<rect x="437.0" y="195.0" width="1" height="30.0" fill="#80ff00"/>
<rect x="430.0" y="225.0" width="14.0" height="15.0" fill="#80ff00"/>
<text x="437.0" y="235.9" fill="#6020e0" text-anchor="middle" font-size="11px" shape-rendering="auto">B</text>
<clipPath id="cpb"><rect x="0" y="0" width="704" height="264"/></clipPath>
<g clip-path="url(#cpb)">
<rect x="549.0" y="224.0" width="1" height="30.0" fill="#80ff00"/>
<rect x="542.0" y="254.0" width="14.0" height="15.0" fill="#80ff00"/>
<text x="549.0" y="264.9" fill="#6020e0" text-anchor="middle" font-size="11px" shape-rendering="auto">B</text>
</g>
<text x="237.3" y="34.8" fill="#4f9fff" shape-rendering="auto" textLength="174" lengthAdjust="spacingAndGlyphs">UA WITHYA PUBLIC COMPANY [day]</text>
</g>
<line x1="1" y1="264.5" x2="649" y2="264.5" stroke="#ffff00"/>
<line x1="1" y1="342.5" x2="649" y2="342.5" stroke="#ffff00"/>
<line x1="1" y1="413.5" x2="649" y2="413.5" stroke="#ffff00"/>
<line x1="1" y1="491.5" x2="649" y2="491.5" stroke="#ffff00"/>
<line x1="1" y1="529.5" x2="649" y2="529.5" stroke="#ffff00"/>
<line x1="2" y1="319.5" x2="645" y2="319.5" stroke="#ff8080" stroke-dasharray="3,2"/>
<line x1="2" y1="367.5" x2="645" y2="367.5" stroke="#ff8080" stroke-dasharray="3,2"/>
<line x1="2" y1="399.5" x2="645" y2="399.5" stroke="#ff8080" stroke-dasharray="3,2"/>
<line x1="2" y1="433.5" x2="645" y2="433.5" stroke="#ff8080" stroke-dasharray="3,2"/>
<line x1="2" y1="473.5" x2="645" y2="473.5" stroke="#ff8080" stroke-dasharray="3,2"/>
<g shape-rendering="crispEdges">
<polyline points="5.0,315.4 20.0,315.1 30.1,314.1 36.7,311.7 46.7,310.4 56.8,309.2 66.8,307.4 76.8,305.4 86.8,303.2 93.5,302.1 100.2,302.1 108.5,302.4 116.9,305.7 126.9,309.1 138.6,312.1 148.6,314.3 160.3,314.6 166.9,313.8 173.6,307.1 180.3,298.7 187.0,290.4 192.0,286.7 197.0,285.4 203.7,285.9 210.4,287.9 220.0,291.7 221.8,292.9 233.5,296.7 243.5,299.6 253.5,302.4 263.5,302.9 273.5,302.9 283.6,304.6 293.6,306.2 303.6,308.4 313.6,311.2 323.6,314.6 333.6,317.9 343.7,320.4 353.7,322.9 362.0,324.6 370.0,324.6 373.4,325.1 383.4,327.9 393.4,330.8 403.4,333.5 413.5,334.6 423.5,335.5 433.5,335.5 443.5,335.0 453.5,332.1 463.5,327.1 473.6,324.6 483.6,323.8 493.6,325.4 503.6,328.8 513.6,331.3 523.6,332.1 533.7,333.5 543.7,333.8 560.0,333.5 563.4,333.0 573.5,331.8 583.5,329.6 593.5,327.6 603.5,325.9 613.5,324.6 623.5,324.1 633.6,324.3 638.6,323.8 643.6,321.8" fill="none" stroke="#ffff00" stroke-width="1" />
<polyline points="5.0,314.6 13.4,314.6 23.4,313.8 28.4,312.1 34.2,308.4 40.9,307.1 48.4,307.4 53.4,308.7 60.1,308.4 66.8,305.7 76.8,302.1 86.8,300.4 93.5,298.7 97.7,297.9 101.8,302.1 108.5,306.2 116.9,311.2 126.9,315.4 136.9,316.6 150.3,316.6 160.3,316.3 164.4,313.8 167.8,303.7 171.1,292.9 175.3,285.4 180.3,278.7 184.5,272.0 188.6,269.5 193.4,274.5 200.1,282.9 206.8,291.2 213.4,296.2 223.5,300.1 233.5,302.1 243.5,304.6 253.5,305.4 260.2,304.6 266.9,303.4 276.9,304.6 286.9,307.9 296.9,311.2 303.6,312.1 310.3,315.4 316.9,318.4 325.3,321.3 333.6,322.9 342.0,325.1 350.3,326.3 360.4,326.3 370.0,325.1 373.4,325.1 381.7,329.6 390.1,333.8 400.1,336.6 410.1,337.5 420.1,337.1 430.2,336.3 440.2,335.5 448.5,330.4 456.9,323.8 463.5,320.1 470.2,319.6 476.9,319.6 483.6,322.9 490.3,327.9 498.6,332.1 506.9,334.3 517.0,333.8 527.0,334.6 537.0,334.1 547.0,334.1 560.0,333.0 563.4,330.8 566.8,330.4 576.8,327.9 586.8,325.1 596.8,323.4 606.8,322.9 616.9,323.3 626.9,323.4 635.2,323.4 640.2,321.3 643.6,318.4" fill="none" stroke="#80ff00" stroke-width="1" />
<polyline points="5.0,380.9 8.3,383.7 12.5,377.6 16.7,375.9 20.9,377.6 25.0,366.7 30.1,365.0 34.6,361.2 38.4,370.9 43.4,370.4 47.6,372.6 51.8,376.4 56.8,373.4 60.9,370.9 64.3,366.7 68.4,365.9 72.6,364.2 76.8,362.2 81.3,366.4 85.1,363.7 90.2,363.0 94.3,360.9 98.5,359.2 100.2,369.2 102.7,383.4 106.8,386.4 113.5,385.1 119.4,386.7 124.4,384.2 128.5,385.4 133.6,382.6 137.7,382.1 141.9,380.1 146.1,381.2 154.4,380.9 158.6,378.1 162.8,375.1 165.3,365.0 167.8,357.5 171.1,352.5 174.5,361.7 179.5,365.0 184.5,361.4 187.8,370.9 192.0,376.7 196.2,378.9 200.3,379.7 205.3,381.4 210.4,383.7 214.5,382.6 218.7,378.7 219.3,378.4 223.5,380.6 228.5,380.1 236.0,378.4 241.0,380.6 245.2,379.6 251.8,379.2 256.8,376.7 261.9,374.2 267.7,374.2 272.7,377.6 277.7,380.4 283.6,379.2 290.2,381.7 296.1,384.2 301.1,380.1 306.9,384.2 312.8,388.4 317.8,385.9 324.5,386.7 331.1,387.6 337.8,390.1 344.5,390.1 351.2,391.4 357.8,388.4 364.5,385.1 370.0,388.4 375.1,393.4 380.9,399.8 385.9,402.6 390.9,398.4 395.1,400.4 400.9,399.3 406.8,397.6 411.8,400.4 420.1,400.4 424.3,395.4 428.5,397.3 435.2,397.6 441.8,397.6 446.0,384.2 451.0,381.7 455.2,374.2 459.4,370.6 463.2,371.7 467.2,380.1 471.9,383.1 476.9,387.6 481.1,392.6 485.2,392.6 489.4,398.4 493.6,396.8 497.8,396.4 502.8,393.4 506.9,395.1 513.6,390.9 518.6,389.2 523.6,394.3 528.6,395.4 537.0,395.4 543.7,393.8 548.7,392.6 553.7,394.3 560.0,392.3 563.4,392.3 570.1,392.3 575.1,389.2 579.3,388.1 583.5,380.4 588.5,382.6 591.8,380.9 596.8,386.7 601.0,388.4 609.3,388.4 613.5,391.3 617.7,387.2 622.7,388.7 626.9,390.1 631.1,390.4 635.2,393.4 637.7,383.4 641.1,370.1 643.6,364.2" fill="none" stroke="#80ff00" stroke-width="1" />
<polyline points="5.0,450.1 13.4,457.6 21.7,460.9 28.4,454.2 34.6,448.4 40.1,448.7 48.4,451.7 58.4,455.4 63.4,454.2 70.1,447.6 76.8,442.6 85.1,434.2 91.8,429.2 98.5,425.9 103.5,431.7 108.5,441.7 113.5,453.4 120.2,462.6 128.5,468.4 136.9,468.1 145.2,465.9 155.3,464.8 160.3,460.9 165.3,453.4 170.3,440.9 174.5,435.9 180.3,435.4 187.0,436.7 193.7,440.1 200.3,447.6 207.0,453.7 215.4,459.2 220.0,460.9 223.5,462.1 231.8,466.8 240.2,470.1 246.8,470.4 253.5,467.6 258.5,458.4 264.4,448.4 269.4,442.6 274.4,443.4 280.2,449.2 288.6,456.4 296.9,463.4 305.3,469.3 311.9,473.4 318.6,477.6 327.0,476.8 333.6,477.6 342.0,481.0 348.7,483.5 355.3,482.6 362.0,478.4 370.0,473.4 373.4,472.6 379.2,476.8 384.2,478.8 391.8,479.3 398.4,479.3 406.8,481.0 415.1,482.1 423.5,483.1 431.8,482.6 440.2,483.1 445.2,478.4 450.2,463.4 455.2,453.4 460.2,445.9 465.2,442.6 470.2,443.4 475.2,447.6 480.2,455.9 485.2,464.3 490.3,470.9 496.9,476.8 505.3,478.1 513.6,478.1 522.0,476.4 530.3,476.8 537.0,475.1 543.7,472.1 550.4,468.8 555.4,467.6 560.0,467.3 563.4,465.9 571.8,464.3 578.5,460.9 583.5,455.1 588.5,450.1 592.7,448.4 598.5,451.7 605.2,458.4 613.5,466.8 621.9,473.4 630.2,479.3 635.2,481.8 639.4,475.9 643.6,468.1" fill="none" stroke="#ffff00" stroke-width="1" />
<polyline points="5.0,453.4 10.0,460.1 16.7,465.1 21.7,465.1 25.0,455.1 30.1,445.1 34.6,438.4 38.4,445.9 42.6,452.6 48.4,456.4 56.8,459.2 61.8,455.1 66.8,445.9 73.5,436.7 80.1,430.9 86.0,426.7 90.2,425.9 94.3,422.5 98.5,422.5 101.8,433.4 106.8,453.4 111.0,468.4 116.9,472.6 123.5,473.1 128.5,472.1 135.2,468.4 141.9,464.3 150.3,463.4 155.3,462.6 160.3,452.6 164.4,443.4 166.9,426.7 170.3,422.0 173.6,425.9 178.6,433.4 183.6,437.5 188.6,439.2 193.7,443.4 200.3,455.9 207.0,461.8 214.5,465.9 220.0,465.1 223.5,465.1 231.8,471.4 238.5,472.6 245.2,471.8 250.2,467.6 254.3,456.7 257.7,443.4 261.0,434.7 266.9,434.2 271.9,439.2 276.9,450.1 281.9,458.4 288.6,463.4 295.2,470.9 303.6,475.1 308.6,478.4 313.6,483.5 318.6,480.1 325.3,476.8 332.0,476.8 338.6,481.8 345.3,486.0 350.3,486.0 357.0,481.8 363.7,470.1 370.0,466.8 374.2,470.9 378.4,481.0 382.6,484.3 388.4,481.0 393.4,479.3 400.1,480.1 404.3,482.1 410.1,481.8 416.8,483.5 421.0,485.1 426.8,483.1 432.7,481.8 438.5,484.3 442.7,483.5 446.8,465.1 451.0,443.4 455.2,435.0 463.5,434.7 467.7,440.1 471.9,448.4 476.9,460.1 481.9,473.4 486.1,480.1 489.4,484.3 494.4,482.6 500.3,480.1 506.9,478.8 513.6,478.4 519.5,475.9 525.3,476.4 532.0,478.1 537.8,473.4 543.7,470.1 549.5,465.9 555.4,464.8 560.0,464.3 563.4,463.4 571.8,463.4 576.8,460.1 580.1,455.9 582.6,447.6 586.0,443.4 590.2,442.2 592.7,443.4 595.2,453.4 600.2,461.8 606.8,468.4 613.5,474.3 621.9,480.1 628.5,482.6 633.6,485.5 636.1,484.3 638.6,473.4 641.1,460.1 643.6,447.1" fill="none" stroke="#80ff00" stroke-width="1" />
</g><g shape-rendering="auto">
<text x="164.2" y="275.8" fill="#4f9fff" textLength="320.7" lengthAdjust="spacingAndGlyphs">Moving Average Convergence / Divergence(26,12,9),Value Line(0)</text>
<text x="123.5" y="353.8" fill="#4f9fff" textLength="402.1" lengthAdjust="spacingAndGlyphs">Relative Strength Index(CLOSE,14,30,70),Overbought Level(70),Oversold Level(30)</text>
<text x="136.6" y="424.8" fill="#4f9fff" textLength="375" lengthAdjust="spacingAndGlyphs">Slow Stochastics Oscillator(14,3,3),Overbought Level(80),Oversold Level(20)</text>
<text x="307.5" y="503.2" fill="#4f9fff" textLength="34.1" lengthAdjust="spacingAndGlyphs">Volume</text>
</g>
<rect x="3" y="524" width="2" height="5" fill="#ffff00"/>
<rect x="7" y="526" width="2" height="3" fill="#ffff00"/>
<rect x="12" y="525" width="2" height="4" fill="#ffff00"/>
<rect x="16" y="524" width="2" height="5" fill="#ffff00"/>
<rect x="20" y="526" width="2" height="3" fill="#ffff00"/>
<rect x="25" y="519" width="2" height="10" fill="#ffff00"/>
<rect x="29" y="520" width="2" height="9" fill="#ffff00"/>
<rect x="33" y="495" width="2" height="34" fill="#ffff00"/>
<rect x="37" y="519" width="2" height="10" fill="#ffff00"/>
<rect x="42" y="523" width="2" height="6" fill="#ffff00"/>
<rect x="46" y="526" width="2" height="3" fill="#ffff00"/>
<rect x="50" y="525" width="2" height="4" fill="#ffff00"/>
<rect x="55" y="526" width="2" height="3" fill="#ffff00"/>
<rect x="59" y="526" width="2" height="3" fill="#ffff00"/>
<rect x="63" y="526" width="2" height="3" fill="#ffff00"/>
<rect x="67" y="525" width="2" height="4" fill="#ffff00"/>
<rect x="72" y="525" width="2" height="4" fill="#ffff00"/>
<rect x="76" y="526" width="2" height="3" fill="#ffff00"/>
<rect x="80" y="526" width="2" height="3" fill="#ffff00"/>
<rect x="85" y="526" width="2" height="3" fill="#ffff00"/>
<rect x="89" y="525" width="2" height="4" fill="#ffff00"/>
<rect x="93" y="525" width="2" height="4" fill="#ffff00"/>
<rect x="97" y="526" width="2" height="3" fill="#ffff00"/>
<rect x="102" y="525" width="2" height="4" fill="#ffff00"/>
<rect x="106" y="526" width="2" height="3" fill="#ffff00"/>
<rect x="110" y="526" width="2" height="3" fill="#ffff00"/>
<rect x="115" y="524" width="2" height="5" fill="#ffff00"/>
<rect x="119" y="524" width="2" height="5" fill="#ffff00"/>
<rect x="123" y="525" width="2" height="4" fill="#ffff00"/>
<rect x="128" y="526" width="2" height="3" fill="#ffff00"/>
<rect x="132" y="525" width="2" height="4" fill="#ffff00"/>
<rect x="136" y="525" width="2" height="4" fill="#ffff00"/>
<rect x="140" y="525" width="2" height="4" fill="#ffff00"/>
<rect x="145" y="526" width="2" height="3" fill="#ffff00"/>
<rect x="149" y="526" width="2" height="3" fill="#ffff00"/>
<rect x="153" y="526" width="2" height="3" fill="#ffff00"/>
<rect x="158" y="525" width="2" height="4" fill="#ffff00"/>
<rect x="162" y="526" width="2" height="3" fill="#ffff00"/>
<rect x="166" y="523" width="2" height="6" fill="#ffff00"/>
<rect x="170" y="521" width="2" height="8" fill="#ffff00"/>
<rect x="175" y="521" width="2" height="8" fill="#ffff00"/>
<rect x="179" y="525" width="2" height="4" fill="#ffff00"/>
<rect x="183" y="521" width="2" height="8" fill="#ffff00"/>
<rect x="188" y="524" width="2" height="5" fill="#ffff00"/>
<rect x="192" y="525" width="2" height="4" fill="#ffff00"/>
<rect x="196" y="525" width="2" height="4" fill="#ffff00"/>
<rect x="200" y="524" width="2" height="5" fill="#ffff00"/>
<rect x="205" y="526" width="2" height="3" fill="#ffff00"/>
<rect x="209" y="526" width="2" height="3" fill="#ffff00"/>
<rect x="213" y="525" width="2" height="4" fill="#ffff00"/>
<rect x="218" y="518" width="2" height="11" fill="#ffff00"/>
<rect x="222" y="524" width="2" height="5" fill="#ffff00"/>
<rect x="226" y="526" width="2" height="3" fill="#ffff00"/>
<rect x="230" y="525" width="2" height="4" fill="#ffff00"/>
<rect x="235" y="526" width="2" height="3" fill="#ffff00"/>
<rect x="239" y="525" width="2" height="4" fill="#ffff00"/>
<rect x="243" y="524" width="2" height="5" fill="#ffff00"/>
<rect x="248" y="526" width="2" height="3" fill="#ffff00"/>
<rect x="252" y="525" width="2" height="4" fill="#ffff00"/>
<rect x="256" y="526" width="2" height="3" fill="#ffff00"/>
<rect x="260" y="522" width="2" height="7" fill="#ffff00"/>
<rect x="265" y="526" width="2" height="3" fill="#ffff00"/>
<rect x="269" y="525" width="2" height="4" fill="#ffff00"/>
<rect x="273" y="524" width="2" height="5" fill="#ffff00"/>
<rect x="278" y="525" width="2" height="4" fill="#ffff00"/>
<rect x="282" y="525" width="2" height="4" fill="#ffff00"/>
<rect x="286" y="525" width="2" height="4" fill="#ffff00"/>
<rect x="291" y="525" width="2" height="4" fill="#ffff00"/>
<rect x="295" y="525" width="2" height="4" fill="#ffff00"/>
<rect x="299" y="525" width="2" height="4" fill="#ffff00"/>
<rect x="303" y="525" width="2" height="4" fill="#ffff00"/>
<rect x="308" y="525" width="2" height="4" fill="#ffff00"/>
<rect x="312" y="526" width="2" height="3" fill="#ffff00"/>
<rect x="316" y="526" width="2" height="3" fill="#ffff00"/>
<rect x="321" y="525" width="2" height="4" fill="#ffff00"/>
<rect x="325" y="527" width="2" height="2" fill="#ffff00"/>
<rect x="329" y="527" width="2" height="2" fill="#ffff00"/>
<rect x="333" y="526" width="2" height="3" fill="#ffff00"/>
<rect x="338" y="526" width="2" height="3" fill="#ffff00"/>
<rect x="342" y="526" width="2" height="3" fill="#ffff00"/>
<rect x="346" y="526" width="2" height="3" fill="#ffff00"/>
<rect x="351" y="526" width="2" height="3" fill="#ffff00"/>
<rect x="355" y="525" width="2" height="4" fill="#ffff00"/>
<rect x="359" y="526" width="2" height="3" fill="#ffff00"/>
<rect x="363" y="526" width="2" height="3" fill="#ffff00"/>
<rect x="368" y="526" width="2" height="3" fill="#ffff00"/>
<rect x="372" y="527" width="2" height="2" fill="#ffff00"/>
<rect x="376" y="527" width="2" height="2" fill="#ffff00"/>
<rect x="381" y="526" width="2" height="3" fill="#ffff00"/>
<rect x="385" y="526" width="2" height="3" fill="#ffff00"/>
<rect x="389" y="527" width="2" height="2" fill="#ffff00"/>
<rect x="393" y="526" width="2" height="3" fill="#ffff00"/>
<rect x="398" y="527" width="2" height="2" fill="#ffff00"/>
<rect x="402" y="526" width="2" height="3" fill="#ffff00"/>
<rect x="406" y="526" width="2" height="3" fill="#ffff00"/>
<rect x="411" y="527" width="2" height="2" fill="#ffff00"/>
<rect x="415" y="525" width="2" height="4" fill="#ffff00"/>
<rect x="419" y="527" width="2" height="2" fill="#ffff00"/>
<rect x="424" y="526" width="2" height="3" fill="#ffff00"/>
<rect x="428" y="526" width="2" height="3" fill="#ffff00"/>
<rect x="432" y="526" width="2" height="3" fill="#ffff00"/>
<rect x="436" y="526" width="2" height="3" fill="#ffff00"/>
<rect x="441" y="525" width="2" height="4" fill="#ffff00"/>
<rect x="445" y="526" width="2" height="3" fill="#ffff00"/>
<rect x="449" y="526" width="2" height="3" fill="#ffff00"/>
<rect x="454" y="526" width="2" height="3" fill="#ffff00"/>
<rect x="458" y="526" width="2" height="3" fill="#ffff00"/>
<rect x="462" y="526" width="2" height="3" fill="#ffff00"/>
<rect x="466" y="527" width="2" height="2" fill="#ffff00"/>
<rect x="471" y="527" width="2" height="2" fill="#ffff00"/>
<rect x="475" y="526" width="2" height="3" fill="#ffff00"/>
<rect x="479" y="526" width="2" height="3" fill="#ffff00"/>
<rect x="484" y="525" width="2" height="4" fill="#ffff00"/>
<rect x="488" y="525" width="2" height="4" fill="#ffff00"/>
<rect x="492" y="527" width="2" height="2" fill="#ffff00"/>
<rect x="496" y="527" width="2" height="2" fill="#ffff00"/>
<rect x="501" y="525" width="2" height="4" fill="#ffff00"/>
<rect x="505" y="525" width="2" height="4" fill="#ffff00"/>
<rect x="509" y="526" width="2" height="3" fill="#ffff00"/>
<rect x="514" y="525" width="2" height="4" fill="#ffff00"/>
<rect x="518" y="526" width="2" height="3" fill="#ffff00"/>
<rect x="522" y="525" width="2" height="4" fill="#ffff00"/>
<rect x="526" y="526" width="2" height="3" fill="#ffff00"/>
<rect x="531" y="526" width="2" height="3" fill="#ffff00"/>
<rect x="535" y="525" width="2" height="4" fill="#ffff00"/>
<rect x="539" y="526" width="2" height="3" fill="#ffff00"/>
<rect x="544" y="525" width="2" height="4" fill="#ffff00"/>
<rect x="548" y="526" width="2" height="3" fill="#ffff00"/>
<rect x="552" y="527" width="2" height="2" fill="#ffff00"/>
<rect x="557" y="526" width="2" height="3" fill="#ffff00"/>
<rect x="561" y="524" width="2" height="5" fill="#ffff00"/>
<rect x="565" y="524" width="2" height="5" fill="#ffff00"/>
<rect x="569" y="526" width="2" height="3" fill="#ffff00"/>
<rect x="574" y="527" width="2" height="2" fill="#ffff00"/>
<rect x="578" y="526" width="2" height="3" fill="#ffff00"/>
<rect x="582" y="527" width="2" height="2" fill="#ffff00"/>
<rect x="587" y="527" width="2" height="2" fill="#ffff00"/>
<rect x="591" y="526" width="2" height="3" fill="#ffff00"/>
<rect x="595" y="527" width="2" height="2" fill="#ffff00"/>
<rect x="599" y="525" width="2" height="4" fill="#ffff00"/>
<rect x="604" y="527" width="2" height="2" fill="#ffff00"/>
<rect x="608" y="526" width="2" height="3" fill="#ffff00"/>
<rect x="612" y="526" width="2" height="3" fill="#ffff00"/>
<rect x="617" y="526" width="2" height="3" fill="#ffff00"/>
<rect x="621" y="527" width="2" height="2" fill="#ffff00"/>
<rect x="625" y="527" width="2" height="2" fill="#ffff00"/>
<rect x="629" y="526" width="2" height="3" fill="#ffff00"/>
<rect x="634" y="526" width="2" height="3" fill="#ffff00"/>
<rect x="638" y="525" width="2" height="4" fill="#ffff00"/>
<rect x="642" y="524" width="2" height="5" fill="#ffff00"/>
<line x1="648.5" y1="24" x2="648.5" y2="551" stroke="#ffff00"/>
<line x1="649" y1="40.5" x2="653" y2="40.5" stroke="#ffff00"/>
<text x="657.5" y="44.1" fill="#fff" font-size="10.4px" shape-rendering="auto">5.75</text>
<line x1="649" y1="56.5" x2="653" y2="56.5" stroke="#ffff00"/>
<text x="657.5" y="60.1" fill="#fff" font-size="10.4px" shape-rendering="auto">5.5</text>
<line x1="649" y1="72.5" x2="653" y2="72.5" stroke="#ffff00"/>
<text x="657.5" y="76.1" fill="#fff" font-size="10.4px" shape-rendering="auto">5.25</text>
<line x1="649" y1="88.5" x2="653" y2="88.5" stroke="#ffff00"/>
<text x="657.5" y="92.1" fill="#fff" font-size="10.4px" shape-rendering="auto">5</text>
<line x1="649" y1="104.5" x2="653" y2="104.5" stroke="#ffff00"/>
<text x="657.5" y="108.1" fill="#fff" font-size="10.4px" shape-rendering="auto">4.75</text>
<line x1="649" y1="120.5" x2="653" y2="120.5" stroke="#ffff00"/>
<text x="657.5" y="124.1" fill="#fff" font-size="10.4px" shape-rendering="auto">4.5</text>
<line x1="649" y1="136.5" x2="653" y2="136.5" stroke="#ffff00"/>
<text x="657.5" y="140.1" fill="#fff" font-size="10.4px" shape-rendering="auto">4.25</text>
<line x1="649" y1="152.5" x2="653" y2="152.5" stroke="#ffff00"/>
<text x="657.5" y="156.1" fill="#fff" font-size="10.4px" shape-rendering="auto">4</text>
<line x1="649" y1="168.5" x2="653" y2="168.5" stroke="#ffff00"/>
<text x="657.5" y="172.1" fill="#fff" font-size="10.4px" shape-rendering="auto">3.75</text>
<line x1="649" y1="184.5" x2="653" y2="184.5" stroke="#ffff00"/>
<text x="657.5" y="188.1" fill="#fff" font-size="10.4px" shape-rendering="auto">3.5</text>
<line x1="649" y1="200.5" x2="653" y2="200.5" stroke="#ffff00"/>
<text x="657.5" y="204.1" fill="#fff" font-size="10.4px" shape-rendering="auto">3.25</text>
<line x1="649" y1="216.5" x2="653" y2="216.5" stroke="#ffff00"/>
<text x="657.5" y="220.1" fill="#fff" font-size="10.4px" shape-rendering="auto">3</text>
<line x1="649" y1="232.5" x2="653" y2="232.5" stroke="#ffff00"/>
<text x="657.5" y="236.1" fill="#fff" font-size="10.4px" shape-rendering="auto">2.75</text>
<line x1="649" y1="248.5" x2="653" y2="248.5" stroke="#ffff00"/>
<text x="657.5" y="252.1" fill="#fff" font-size="10.4px" shape-rendering="auto">2.5</text>
<line x1="649" y1="273.5" x2="653" y2="273.5" stroke="#ffff00"/>
<line x1="649" y1="282.5" x2="653" y2="282.5" stroke="#ffff00"/>
<text x="657.5" y="286.1" fill="#fff" font-size="10.4px" shape-rendering="auto">0.45</text>
<line x1="649" y1="290.5" x2="653" y2="290.5" stroke="#ffff00"/>
<line x1="649" y1="298.5" x2="653" y2="298.5" stroke="#ffff00"/>
<text x="657.5" y="302.1" fill="#fff" font-size="10.4px" shape-rendering="auto">0.25</text>
<line x1="649" y1="306.5" x2="653" y2="306.5" stroke="#ffff00"/>
<line x1="649" y1="314.5" x2="653" y2="314.5" stroke="#ffff00"/>
<text x="657.5" y="318.1" fill="#fff" font-size="10.4px" shape-rendering="auto">0.05</text>
<line x1="649" y1="322.5" x2="653" y2="322.5" stroke="#ffff00"/>
<line x1="649" y1="330.5" x2="653" y2="330.5" stroke="#ffff00"/>
<text x="657.5" y="334.1" fill="#fff" font-size="10.4px" shape-rendering="auto">-0.15</text>
<line x1="649" y1="338.5" x2="653" y2="338.5" stroke="#ffff00"/>
<line x1="649" y1="350.5" x2="653" y2="350.5" stroke="#ffff00"/>
<line x1="649" y1="358.5" x2="653" y2="358.5" stroke="#ffff00"/>
<text x="657.5" y="362.1" fill="#fff" font-size="10.4px" shape-rendering="auto">80</text>
<line x1="649" y1="366.5" x2="653" y2="366.5" stroke="#ffff00"/>
<line x1="649" y1="374.5" x2="653" y2="374.5" stroke="#ffff00"/>
<text x="657.5" y="378.1" fill="#fff" font-size="10.4px" shape-rendering="auto">60</text>
<line x1="649" y1="382.5" x2="653" y2="382.5" stroke="#ffff00"/>
<line x1="649" y1="390.5" x2="653" y2="390.5" stroke="#ffff00"/>
<text x="657.5" y="394.1" fill="#fff" font-size="10.4px" shape-rendering="auto">40</text>
<line x1="649" y1="398.5" x2="653" y2="398.5" stroke="#ffff00"/>
<line x1="649" y1="406.5" x2="653" y2="406.5" stroke="#ffff00"/>
<text x="657.5" y="410.1" fill="#fff" font-size="10.4px" shape-rendering="auto">20</text>
<line x1="649" y1="420.5" x2="653" y2="420.5" stroke="#ffff00"/>
<line x1="649" y1="427.5" x2="653" y2="427.5" stroke="#ffff00"/>
<line x1="649" y1="433.5" x2="653" y2="433.5" stroke="#ffff00"/>
<line x1="649" y1="440.5" x2="653" y2="440.5" stroke="#ffff00"/>
<text x="657.5" y="444.1" fill="#fff" font-size="10.4px" shape-rendering="auto">70</text>
<line x1="649" y1="446.5" x2="653" y2="446.5" stroke="#ffff00"/>
<line x1="649" y1="453.5" x2="653" y2="453.5" stroke="#ffff00"/>
<line x1="649" y1="459.5" x2="653" y2="459.5" stroke="#ffff00"/>
<text x="657.5" y="463.1" fill="#fff" font-size="10.4px" shape-rendering="auto">40</text>
<line x1="649" y1="466.5" x2="653" y2="466.5" stroke="#ffff00"/>
<line x1="649" y1="473.5" x2="653" y2="473.5" stroke="#ffff00"/>
<line x1="649" y1="479.5" x2="653" y2="479.5" stroke="#ffff00"/>
<text x="657.5" y="483.1" fill="#fff" font-size="10.4px" shape-rendering="auto">10</text>
<line x1="649" y1="486.5" x2="653" y2="486.5" stroke="#ffff00"/>
<line x1="649" y1="498.5" x2="653" y2="498.5" stroke="#ffff00"/>
<line x1="649" y1="505.5" x2="653" y2="505.5" stroke="#ffff00"/>
<line x1="649" y1="512.5" x2="653" y2="512.5" stroke="#ffff00"/>
<rect x="649" y="165" width="54" height="15" fill="#c8f4c8"/>
<text x="650" y="176.2" fill="#101010" font-size="10.2px" shape-rendering="auto">3.80</text>
<rect x="649" y="515" width="54" height="14.5" fill="#ffff00"/>
<text x="650.3" y="526.3" fill="#000" font-size="10.5px" shape-rendering="auto">16,425,100</text>
<line x1="1" y1="544.5" x2="649" y2="544.5" stroke="#ffff00"/>
<line x1="0.5" y1="529" x2="0.5" y2="544" stroke="#ffff00"/>
<line x1="81.5" y1="529" x2="81.5" y2="544" stroke="#ffff00"/>
<text x="84.5" y="540" fill="#fff" font-size="10.4px" shape-rendering="auto">02/11</text>
<line x1="158.5" y1="529" x2="158.5" y2="544" stroke="#ffff00"/>
<text x="161.5" y="540" fill="#fff" font-size="10.4px" shape-rendering="auto">28/11</text>
<line x1="236.5" y1="529" x2="236.5" y2="544" stroke="#ffff00"/>
<text x="239.5" y="540" fill="#fff" font-size="10.4px" shape-rendering="auto">26/12</text>
<line x1="313.5" y1="529" x2="313.5" y2="544" stroke="#ffff00"/>
<text x="316.5" y="540" fill="#fff" font-size="10.4px" shape-rendering="auto">23/01</text>
<line x1="390.5" y1="529" x2="390.5" y2="544" stroke="#ffff00"/>
<text x="393.5" y="540" fill="#fff" font-size="10.4px" shape-rendering="auto">18/02</text>
<line x1="467.5" y1="529" x2="467.5" y2="544" stroke="#ffff00"/>
<text x="470.5" y="540" fill="#fff" font-size="10.4px" shape-rendering="auto">15/03</text>
<line x1="545.5" y1="529" x2="545.5" y2="544" stroke="#ffff00"/>
<text x="548.5" y="540" fill="#fff" font-size="10.4px" shape-rendering="auto">11/04</text>
<line x1="622.5" y1="529" x2="622.5" y2="544" stroke="#ffff00"/>
<line x1="3.5" y1="544" x2="3.5" y2="551" stroke="#ffff00"/>
<text x="7.0" y="556.2" fill="#fff" font-size="10.4px" shape-rendering="auto">2555</text>
<line x1="77.5" y1="544" x2="77.5" y2="551" stroke="#ffff00"/>
<text x="81.0" y="556.2" fill="#fff" font-size="10.4px" shape-rendering="auto">Nov</text>
<line x1="171.5" y1="544" x2="171.5" y2="551" stroke="#ffff00"/>
<text x="175.0" y="556.2" fill="#fff" font-size="10.4px" shape-rendering="auto">Dec</text>
<line x1="248.5" y1="544" x2="248.5" y2="551" stroke="#ffff00"/>
<text x="252.0" y="556.2" fill="#fff" font-size="10.4px" shape-rendering="auto">2556</text>
<line x1="344.5" y1="544" x2="344.5" y2="551" stroke="#ffff00"/>
<text x="348.0" y="556.2" fill="#fff" font-size="10.4px" shape-rendering="auto">Feb</text>
<line x1="424.5" y1="544" x2="424.5" y2="551" stroke="#ffff00"/>
<text x="428.0" y="556.2" fill="#fff" font-size="10.4px" shape-rendering="auto">Mar</text>
<line x1="514.5" y1="544" x2="514.5" y2="551" stroke="#ffff00"/>
<text x="518.0" y="556.2" fill="#fff" font-size="10.4px" shape-rendering="auto">Apr</text>
<line x1="596.5" y1="544" x2="596.5" y2="551" stroke="#ffff00"/>
<text x="600.0" y="556.2" fill="#fff" font-size="10.4px" shape-rendering="auto">May</text>
<rect x="0" y="0" width="113" height="20" fill="#fff"/>
<rect x="96" y="1" width="16" height="18" fill="#ececec"/>
<path d="M101.5 8 h5.6 l-2.8 3.2 z" fill="#000" shape-rendering="auto"/>
<text x="2.8" y="13.2" fill="#101030" font-size="10.2px" shape-rendering="auto">UWC</text>
<path d="M114.5 0 V21.5 H703.5 V0 M427.5 0 V21 M507.5 0 V21 M587.5 0 V21" fill="none" stroke="#ffff00"/>
<rect x="588" y="0" width="114" height="20" fill="#efefef"/>
<text x="645.5" y="16" fill="#0000ff" font-weight="bold" font-size="11px" text-anchor="middle" shape-rendering="auto">Recal Scale-Linear</text>
<text x="505" y="16" fill="#fff" text-anchor="end" shape-rendering="auto">218/210</text>
<text x="585" y="16" fill="#fff" text-anchor="end" shape-rendering="auto">4.60</text>
</svg>
<div class="abs" style="left:704px;top:0;width:9px;height:551px;background:linear-gradient(90deg,#9aa0b0,#d8dce8 30%,#c0c6d4 60%,#8890a0)"></div>
<div class="abs" style="left:713px;top:0;width:614px;height:24px;background:#f3f3f3"></div>
<div class="combo" style="left:713px;width:74px"></div>
<div class="cbtn" style="left:787px;width:17px"></div>
<div class="ct" style="left:718px;max-width:68px;overflow:hidden">UWC</div>
<div class="t b" style="left:815.5px;top:4.5px;font-size:11px;color:#000">From :</div>
<div class="combo" style="left:854px;width:32px"></div>
<div class="cbtn" style="left:886px;width:16px"></div>
<div class="ct" style="left:858px;max-width:27px;overflow:hidden">2009</div>
<div class="t b" style="left:916px;top:4.5px;font-size:11px;color:#000">To :</div>
<div class="combo" style="left:941px;width:32px"></div>
<div class="cbtn" style="left:973px;width:16px"></div>
<div class="ct" style="left:945px;max-width:27px;overflow:hidden">2014</div>
<div class="combo" style="left:998px;width:69px"></div>
<div class="cbtn" style="left:1067px;width:18px"></div>
<div class="ct" style="left:1003px;max-width:63px;overflow:hidden">Company</div>
<div class="combo" style="left:1093px;width:43px"></div>
<div class="cbtn" style="left:1136px;width:18px"></div>
<div class="ct" style="left:1096px;max-width:39px;overflow:hidden">Quarter</div>
<div class="combo" style="left:1162px;width:65px"></div>
<div class="cbtn" style="left:1227px;width:17px"></div>
<div class="ct" style="left:1166px;max-width:60px;overflow:hidden">2D-UpDown</div>
<div class="btn" style="left:1254px;top:1px;width:38px;height:21px;line-height:20px;font-weight:normal">Go</div>
<div class="abs" style="left:713px;top:24px;width:614px;height:217px;background:#000"></div>
<svg class="abs" style="left:713px;top:24px" width="614" height="217" viewBox="713 24 614 217" font-family='&quot;Liberation Sans&quot;, Arial, sans-serif' shape-rendering="crispEdges">
<line x1="766" y1="210.5" x2="1313" y2="210.5" stroke="#3a3a3a" stroke-dasharray="1,1"/>
<text x="763.5" y="213.8" fill="#ffff00" font-size="11px" text-anchor="end" shape-rendering="auto">0</text>
<line x1="766" y1="194.5" x2="1313" y2="194.5" stroke="#3a3a3a" stroke-dasharray="1,1"/>
<text x="763.5" y="197.8" fill="#ffff00" font-size="11px" text-anchor="end" shape-rendering="auto">2</text>
<line x1="766" y1="178.5" x2="1313" y2="178.5" stroke="#3a3a3a" stroke-dasharray="1,1"/>
<text x="763.5" y="181.8" fill="#ffff00" font-size="11px" text-anchor="end" shape-rendering="auto">4</text>
<line x1="766" y1="162.5" x2="1313" y2="162.5" stroke="#3a3a3a" stroke-dasharray="1,1"/>
<text x="763.5" y="165.8" fill="#ffff00" font-size="11px" text-anchor="end" shape-rendering="auto">6</text>
<line x1="766" y1="146.5" x2="1313" y2="146.5" stroke="#3a3a3a" stroke-dasharray="1,1"/>
<text x="763.5" y="149.8" fill="#ffff00" font-size="11px" text-anchor="end" shape-rendering="auto">8</text>
<line x1="766" y1="130.5" x2="1313" y2="130.5" stroke="#3a3a3a" stroke-dasharray="1,1"/>
<text x="763.5" y="133.8" fill="#ffff00" font-size="11px" text-anchor="end" shape-rendering="auto">10</text>
<line x1="766" y1="113.5" x2="1313" y2="113.5" stroke="#3a3a3a" stroke-dasharray="1,1"/>
<text x="763.5" y="116.8" fill="#ffff00" font-size="11px" text-anchor="end" shape-rendering="auto">12</text>
<line x1="766" y1="97.5" x2="1313" y2="97.5" stroke="#3a3a3a" stroke-dasharray="1,1"/>
<text x="763.5" y="100.8" fill="#ffff00" font-size="11px" text-anchor="end" shape-rendering="auto">14</text>
<line x1="766" y1="81.5" x2="1313" y2="81.5" stroke="#3a3a3a" stroke-dasharray="1,1"/>
<text x="763.5" y="84.8" fill="#ffff00" font-size="11px" text-anchor="end" shape-rendering="auto">16</text>
<line x1="766" y1="65.5" x2="1313" y2="65.5" stroke="#3a3a3a" stroke-dasharray="1,1"/>
<text x="763.5" y="68.8" fill="#ffff00" font-size="11px" text-anchor="end" shape-rendering="auto">18</text>
<line x1="766" y1="49.5" x2="1313" y2="49.5" stroke="#3a3a3a" stroke-dasharray="1,1"/>
<text x="763.5" y="52.8" fill="#ffff00" font-size="11px" text-anchor="end" shape-rendering="auto">20</text>
<line x1="766.5" y1="48" x2="766.5" y2="211" stroke="#3a3a3a" stroke-dasharray="1,1"/>
<line x1="913.5" y1="48" x2="913.5" y2="211" stroke="#3a3a3a" stroke-dasharray="1,1"/>
<line x1="1039.5" y1="48" x2="1039.5" y2="211" stroke="#3a3a3a" stroke-dasharray="1,1"/>
<line x1="1165.5" y1="48" x2="1165.5" y2="211" stroke="#3a3a3a" stroke-dasharray="1,1"/>
<line x1="1313.5" y1="48" x2="1313.5" y2="211" stroke="#3a3a3a" stroke-dasharray="1,1"/>
<rect x="807.5" y="197.5" width="41.0" height="13.0" fill="#008000" stroke="#e8ffe8" stroke-width="1"/>
<rect x="849.5" y="170.5" width="41.5" height="40.0" fill="#008000" stroke="#e8ffe8" stroke-width="1"/>
<rect x="934.0" y="153.5" width="41.5" height="57.0" fill="#008000" stroke="#e8ffe8" stroke-width="1"/>
<rect x="1059.5" y="125.5" width="42.0" height="85.0" fill="#008000" stroke="#e8ffe8" stroke-width="1"/>
<rect x="1185.5" y="183.5" width="42.0" height="27.0" fill="#008000" stroke="#e8ffe8" stroke-width="1"/>
<text transform="translate(834.6,224.5) rotate(-90)" fill="#ffff00" font-size="10px" x="0" y="0" shape-rendering="auto">12</text>
<text transform="translate(875.6,224.5) rotate(-90)" fill="#ffff00" font-size="10px" x="0" y="0" shape-rendering="auto">13</text>
<text transform="translate(960.1,224.5) rotate(-90)" fill="#ffff00" font-size="10px" x="0" y="0" shape-rendering="auto">12</text>
<text transform="translate(1002.6,224.5) rotate(-90)" fill="#ffff00" font-size="10px" x="0" y="0" shape-rendering="auto">13</text>
<text transform="translate(1087.1,224.5) rotate(-90)" fill="#ffff00" font-size="10px" x="0" y="0" shape-rendering="auto">12</text>
<text transform="translate(1129.1,224.5) rotate(-90)" fill="#ffff00" font-size="10px" x="0" y="0" shape-rendering="auto">13</text>
<text transform="translate(1213.1,224.5) rotate(-90)" fill="#ffff00" font-size="10px" x="0" y="0" shape-rendering="auto">12</text>
<text transform="translate(1255.1,224.5) rotate(-90)" fill="#ffff00" font-size="10px" x="0" y="0" shape-rendering="auto">13</text>
<text x="850.0" y="242" fill="#fff" font-weight="bold" font-size="12px" text-anchor="middle" shape-rendering="auto">1Q</text>
<text x="976.7" y="242" fill="#fff" font-weight="bold" font-size="12px" text-anchor="middle" shape-rendering="auto">2Q</text>
<text x="1103.0" y="242" fill="#fff" font-weight="bold" font-size="12px" text-anchor="middle" shape-rendering="auto">3Q</text>
<text x="1229.3" y="242" fill="#fff" font-weight="bold" font-size="12px" text-anchor="middle" shape-rendering="auto">4Q</text>
<text x="1270.7" y="242" fill="#ffff00" font-weight="bold" font-size="12px" shape-rendering="auto">Quadrant</text>
<text x="747" y="40" fill="#ffff00" font-weight="bold" font-size="12.2px" shape-rendering="auto">M Baht</text>
<text x="803.7" y="40" fill="#fff" font-weight="bold" font-size="12.5px" shape-rendering="auto">(Fiscal Year End : 31/12)</text>
<rect x="713" y="221" width="147" height="20" fill="#000"/>
<rect x="714.5" y="225.5" width="12" height="12" fill="#d8d8d8" stroke="#f8f8f8"/>
<rect x="716.5" y="227.5" width="8" height="8" fill="#a0a0a0" stroke="#707070"/>
<text x="734" y="235.2" fill="#fff" font-weight="bold" font-size="11.8px" shape-rendering="auto">Show Fiscal Year End</text>
</svg>
<div class="abs" style="left:713px;top:241px;width:614px;height:117px;background:#000;overflow:hidden">
<div class="hdr" style="left:0.0px;top:0;width:103.5px;border-right:1px solid #2020a0;box-sizing:border-box">Year</div>
<div class="hdr" style="left:103.5px;top:0;width:103.0px;border-right:1px solid #2020a0;box-sizing:border-box">Q1</div>
<div class="hdr" style="left:206.5px;top:0;width:103.0px;border-right:1px solid #2020a0;box-sizing:border-box">Q2</div>
<div class="hdr" style="left:309.5px;top:0;width:103.0px;border-right:1px solid #2020a0;box-sizing:border-box">Q3</div>
<div class="hdr" style="left:412.5px;top:0;width:103.0px;border-right:1px solid #2020a0;box-sizing:border-box">Q4</div>
<div class="hdr" style="left:515.5px;top:0;width:103.5px;border-right:1px solid #2020a0;box-sizing:border-box">Sum</div>
<div class="cell yr" style="left:0;top:22.2px;width:103.5px">2013</div>
<div class="cell" style="left:103.5px;top:22.2px;width:103.0px;padding-right:2px">4.82</div>
<div class="cell na" style="left:206.5px;top:22.2px;width:103.0px;padding-right:2px">N/A</div>
<div class="cell na" style="left:309.5px;top:22.2px;width:103.0px;padding-right:2px">N/A</div>
<div class="cell na" style="left:412.5px;top:22.2px;width:103.0px;padding-right:2px">N/A</div>
<div class="cell" style="left:515.5px;top:22.2px;width:103.5px;padding-right:20px">4.82</div>
<div class="cell yr" style="left:0;top:45.4px;width:103.5px">2012</div>
<div class="cell" style="left:103.5px;top:45.4px;width:103.0px;padding-right:2px">1.48</div>
<div class="cell" style="left:206.5px;top:45.4px;width:103.0px;padding-right:2px">6.92</div>
<div class="cell" style="left:309.5px;top:45.4px;width:103.0px;padding-right:2px">10.36</div>
<div class="cell" style="left:412.5px;top:45.4px;width:103.0px;padding-right:2px">3.22</div>
<div class="cell" style="left:515.5px;top:45.4px;width:103.5px;padding-right:20px">21.99</div>
</div>
<div class="abs" style="left:709px;top:357px;width:618px;height:7px;background:linear-gradient(#e4e8f0,#c4ccdc)"></div>
<div class="abs" style="left:709px;top:363px;width:618px;height:17px;background:#b9c5da"></div>
<div class="t b" style="left:713.5px;top:365.5px;font-size:12px;color:#10101c">[Link1] News</div>
<div class="t b" style="left:1033px;top:365.5px;font-size:11.8px;color:#ffff20">Previous 12 Month(s)</div>
<div class="abs b" style="left:1208px;top:364.5px;width:63px;height:14px;background:#1a1a78;color:#fff;font-size:11.5px;text-align:center;line-height:14px">Reset</div>
<div class="abs b" style="left:1273.5px;top:364.5px;width:43px;height:14px;background:#000080;color:#fff;font-size:11.5px;text-align:center;line-height:14px">OUT</div>
<div class="abs b" style="left:1319px;top:364.5px;width:12px;height:14px;background:#000080;color:#fff;font-size:11.5px;text-align:center;line-height:14px">X</div>
<div class="abs" style="left:709px;top:380px;width:618px;height:22px;background:#000"></div>
<div class="abs" style="left:709px;top:380px;width:7px;height:171px;background:#eef0f6"></div>
<div class="abs b" style="left:710px;top:380px;width:69px;height:23px;background:#fff;color:#000;font-size:12px;line-height:20px;padding-left:9.5px">News (0)</div>
<div class="abs b" style="left:780px;top:383px;width:65px;height:19px;background:#e4e4e4;border:1px solid #a8a8a8;border-bottom:none;color:#000;font-size:11.5px;line-height:19px;padding-left:3px;letter-spacing:0.2px">RSSFeeds</div>
<div class="abs" style="left:713px;top:402px;width:614px;height:39px;background:#f2f2f2"></div>
<div class="abs" style="left:714px;top:411px;width:404px;height:28px;border:1px solid #dcdcdc;border-radius:3px"></div>
<div class="t b" style="left:721px;top:405.5px;font-size:11.8px;letter-spacing:0.7px;color:#000;background:#f2f2f2;padding:0 3px">Page : 1/1</div>
<div class="abs b" style="left:716px;top:417px;width:98px;height:17.5px;background:#fff;color:#000;font-size:12.4px;line-height:17px;padding-left:2px">UWC</div>
<div class="abs b" style="left:819px;top:417px;width:134px;height:17.5px;background:#fff;color:#000;font-size:12px;line-height:17px;padding-left:2px">Keyword</div>
<div class="btn" style="left:961.5px;top:417px;width:52px;height:18px;line-height:16px;font-size:11.5px">Search</div>
<div class="btn" style="left:1022px;top:417px;width:28px;height:18px"></div>
<svg class="abs" style="left:1026px;top:419px" width="20" height="13" viewBox="0 0 20 13">
<rect width="20" height="13" fill="#fff"/><rect width="12" height="2.2" fill="#e02030"/><rect y="10.8" width="12" height="2.2" fill="#e02030"/><rect y="4.3" width="12" height="4.4" fill="#2030b0"/>
<rect x="11" width="9" height="13" fill="#203080"/><path d="M11 0 L20 13 M20 0 L11 13" stroke="#fff" stroke-width="1.6"/><path d="M15.5 0 V13 M11 6.5 H20" stroke="#fff" stroke-width="3"/><path d="M15.5 0 V13 M11 6.5 H20" stroke="#e02030" stroke-width="1.4"/>
</svg>
<div class="btn" style="left:1057px;top:417px;width:53px;height:18px;line-height:16px;font-size:11.5px">Option</div>
<div class="nav" style="left:1123.0px;top:416.5px;width:33px;height:18.5px"><i>&lt;&lt;</i></div>
<div class="nav" style="left:1164.0px;top:416.5px;width:33px;height:18.5px"><i>&lt;</i></div>
<div class="nav" style="left:1205.0px;top:416.5px;width:33px;height:18.5px"><i>&gt;</i></div>
<div class="nav" style="left:1246.0px;top:416.5px;width:33px;height:18.5px"><i>&gt;&gt;</i></div>
<div class="abs" style="left:716px;top:440px;width:611px;height:111px;background:#000"></div>
<div class="nw" style="left:743.8px;top:442.5px;font-size:12.6px">14/05/13</div>
<div class="nw" style="left:796.4px;top:442.5px;font-size:12.4px">20:13</div>
<div class="nw" style="left:833.7px;top:442.5px">SET</div>
<div class="nw" style="left:866.8px;top:442.5px">[ UWC ]</div>
<div class="nw" style="left:918.6px;top:442.5px">Financial Statement Quarter 1/2013</div>
<div class="nw" style="left:743.8px;top:462.5px;font-size:12.6px">14/05/13</div>
<div class="nw" style="left:796.4px;top:462.5px;font-size:12.4px">20:13</div>
<div class="nw" style="left:833.7px;top:462.5px">SET</div>
<div class="nw" style="left:866.8px;top:462.5px">[ UWC ]</div>
<div class="nw" style="left:918.6px;top:462.5px"><span class="th" style="font-size:11.8px">งบการเงินไตรมาสที่</span> 1/2556</div>
<div class="nw" style="left:743.8px;top:482.5px;font-size:12.6px">14/05/13</div>
<div class="nw" style="left:796.4px;top:482.5px;font-size:12.4px">19:41</div>
<div class="nw" style="left:833.7px;top:482.5px">SET</div>
<div class="nw" style="left:866.8px;top:482.5px">[ UWC ]</div>
<div class="nw" style="left:918.6px;top:482.5px">To Clarify the result of operation quater 1-2013</div>
<div class="nw" style="left:743.8px;top:502.5px;font-size:12.6px">14/05/13</div>
<div class="nw" style="left:796.4px;top:502.5px;font-size:12.4px">19:41</div>
<div class="nw" style="left:833.7px;top:502.5px">SET</div>
<div class="nw" style="left:866.8px;top:502.5px">[ UWC ]</div>
<div class="nw" style="left:918.6px;top:502.5px"><span class="th" style="font-size:11.4px">ชี้แจงผลการดำเนินงานไตรมาส</span> 1 <span class="th" style="font-size:11.4px">ปี</span>2556</div>
<div class="nw" style="left:743.8px;top:522.5px;font-size:12.6px">14/05/13</div>
<div class="nw" style="left:796.4px;top:522.5px;font-size:12.4px">19:39</div>
<div class="nw" style="left:833.7px;top:522.5px">SET</div>
<div class="nw" style="left:866.8px;top:522.5px">[ UWC ]</div>
<div class="nw" style="left:918.6px;top:522.5px">Reviewed Quarter 1 F/S (F45-1)</div>
<div class="nw" style="left:743.8px;top:542.5px;font-size:12.6px">14/05/13</div>
<div class="nw" style="left:796.4px;top:542.5px;font-size:12.4px">19:39</div>
<div class="nw" style="left:833.7px;top:542.5px">SET</div>
<div class="nw" style="left:866.8px;top:542.5px">[ UWC ]</div>
<div class="nw" style="left:918.6px;top:542.5px"><span class="th" style="font-size:11.2px">สรุปผลการดำเนินงานของ บจ. ไตรมาสที่</span> 1 (F45-1)</div>
<div class="abs" style="left:1309.5px;top:441px;width:17.5px;height:110px;background:#f0f0f0"></div>
<div class="abs" style="left:1310px;top:442px;width:16px;height:17px;background:#f4f4f4"></div>
<svg class="abs" style="left:1313px;top:447px" width="10" height="6" viewBox="0 0 10 6"><path d="M1 5 L5 1 L9 5" fill="none" stroke="#404040" stroke-width="1.6"/></svg>
<div class="abs" style="left:1310.5px;top:460px;width:15px;height:17px;border:1px solid #909090;border-radius:2px;background:linear-gradient(90deg,#f4f4f4,#d8d8d8)"></div>
<div class="abs" style="left:1314px;top:465px;width:8px;height:1px;background:#606060;box-shadow:0 2px #606060,0 4px #606060"></div>
</body></html>
